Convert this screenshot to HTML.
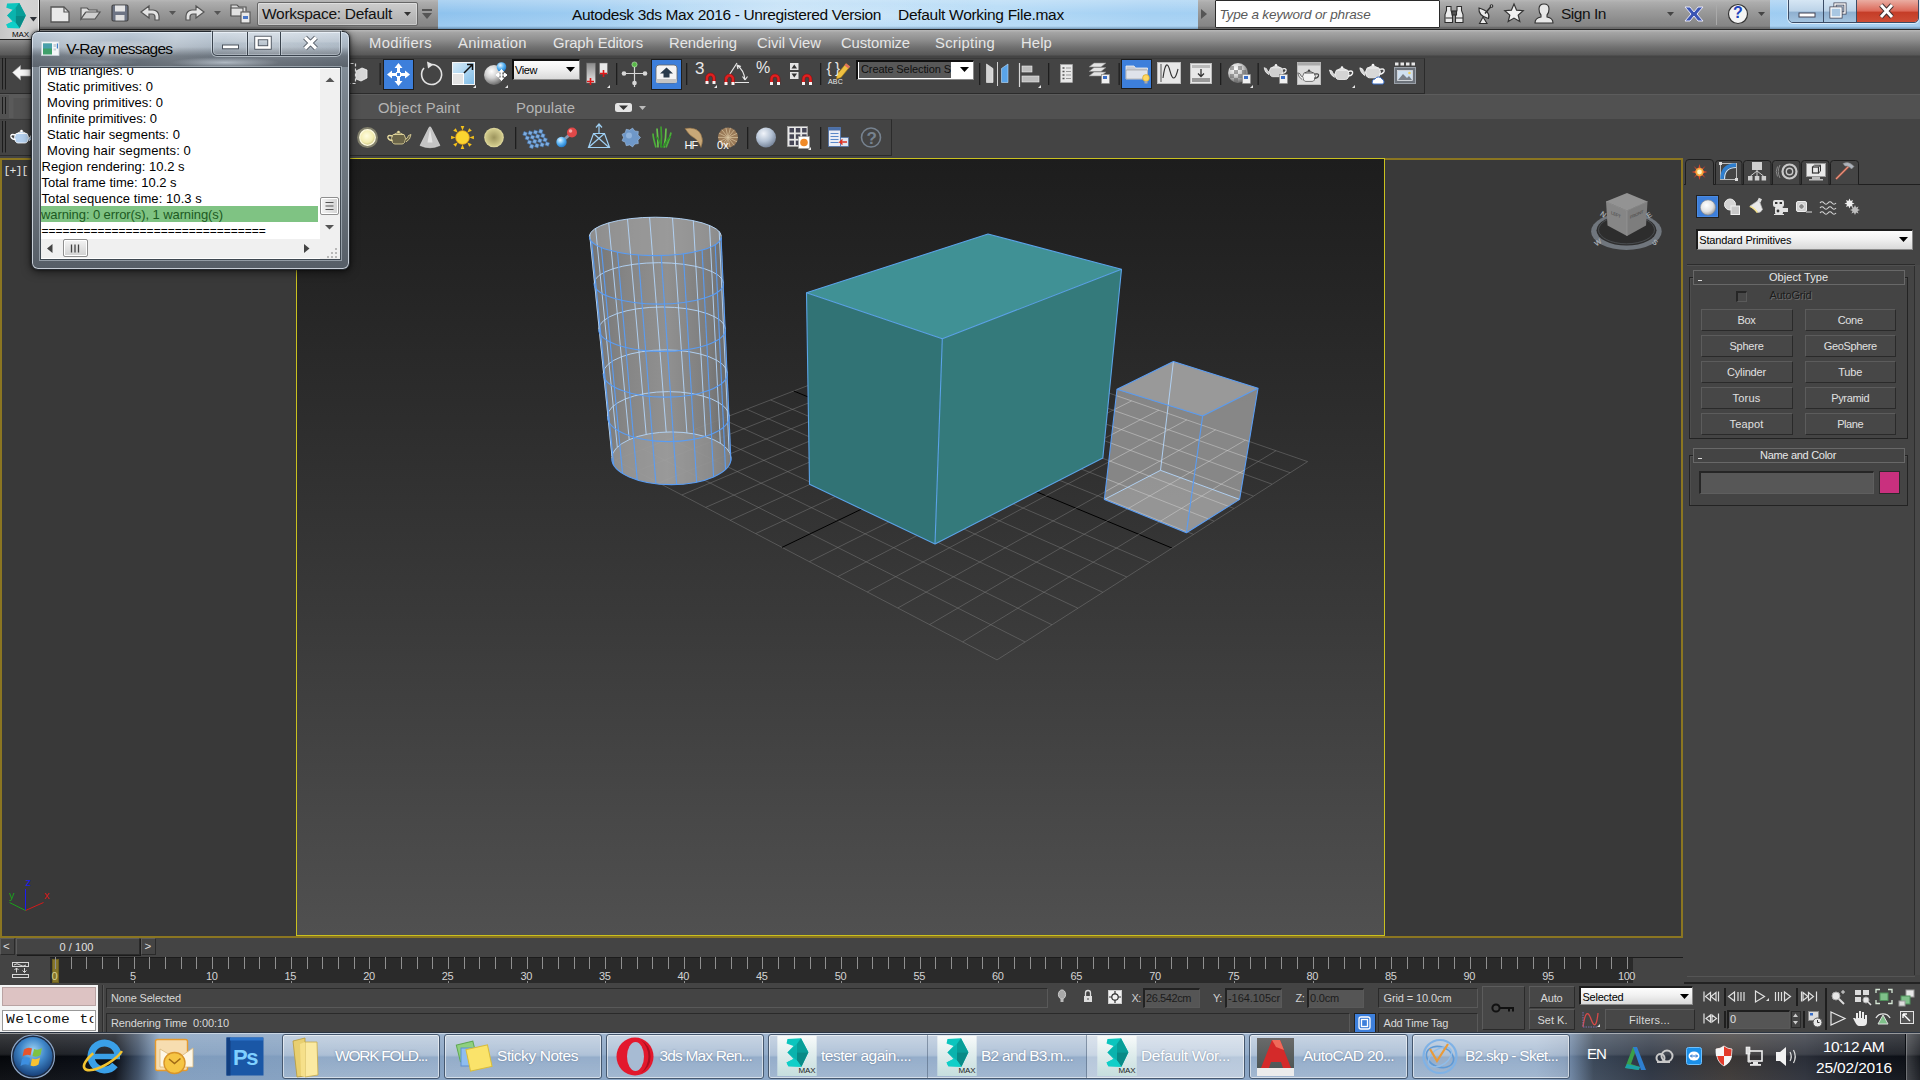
<!DOCTYPE html>
<html><head><meta charset="utf-8"><title>Autodesk 3ds Max 2016</title>
<style>
*{box-sizing:border-box;margin:0;padding:0}
html,body{width:1920px;height:1080px;overflow:hidden;background:#444;font-family:"Liberation Sans",sans-serif;}
.abs{position:absolute}
.t{white-space:pre;line-height:1.15}
#root{position:relative;width:1920px;height:1080px;overflow:hidden;background:#444}
svg{overflow:visible}
</style></head>
<body><div id="root">
<!--top-->
<div class="abs" style="left:0px;top:0px;width:1920px;height:29px;background:linear-gradient(90deg,#8fc3ee 23%,#9ccbf1 30%,#a9d4f4 42%,#b2d9f6 52%,#a4d0f3 60%,#9dcbf1 100%);"></div>
<div class="abs" style="left:0px;top:0px;width:1920px;height:29px;background:linear-gradient(rgba(255,255,255,.28),rgba(255,255,255,0) 45%,rgba(255,255,255,.12) 90%,rgba(60,90,120,.5) 100%);"></div>
<div class="abs" style="left:560px;top:3px;width:520px;height:23px;background:radial-gradient(ellipse at center,rgba(255,255,255,.35),rgba(255,255,255,0) 70%);"></div>
<div class="abs" style="left:438px;top:0px;width:760px;height:29px;background:linear-gradient(100deg,rgba(255,255,255,0) 20%,rgba(255,255,255,.25) 45%,rgba(255,255,255,0) 70%);"></div>
<div class="abs" style="left:0px;top:0px;width:438px;height:29px;background:linear-gradient(#b7b7b7 0,#adadad 8%,#9c9c9c 36%,#8b8b8b 72%,#858585 90%,#6a6a6a 95%,#696969 100%);"></div>
<div class="abs" style="left:1198px;top:0px;width:572px;height:29px;background:linear-gradient(#b7b7b7 0,#adadad 8%,#9c9c9c 36%,#8b8b8b 72%,#858585 90%,#6a6a6a 95%,#696969 100%);"></div>
<svg class="abs" style="left:0px;top:0px;" width="440" height="29" viewBox="0 0 440 29"><path d="M51,7 h13 l5,5 v10 h-18z" fill="#e9e9e9" stroke="#555" stroke-width="1.3"/><path d="M64,7 v5 h5" fill="none" stroke="#555" stroke-width="1.2"/><path d="M81,19 v-11 h6 l2,2 h8 v3 h-12z" fill="#ddd" stroke="#555" stroke-width="1.2"/><path d="M81,19 l5,-7 h14 l-5,7z" fill="#cfcfcf" stroke="#555" stroke-width="1.2"/><rect x="112" y="5" width="16" height="16" rx="1.5" fill="#6d7484" stroke="#444" stroke-width="1.2"/><rect x="115" y="5.5" width="10" height="6" fill="#e6e6e6"/><rect x="115.5" y="15" width="9" height="5.5" fill="#e0e0e0"/><path d="M141,12 l8,-6 v4 h4 a6,6 0 0 1 6,6 v4 h-4 v-3 a3,3 0 0 0 -3,-3 h-3 v4z" fill="#e4e4e4" stroke="#555" stroke-width="1.2"/><polygon points="169,11 176,11 172.5,15" fill="#555"/><path d="M204,12 l-8,-6 v4 h-4 a6,6 0 0 0 -6,6 v4 h4 v-3 a3,3 0 0 1 3,-3 h3 v4z" fill="#e4e4e4" stroke="#555" stroke-width="1.2"/><polygon points="214,11 221,11 217.5,15" fill="#555"/><path d="M231,16 v-11 h6 l2,2 h7 v4" fill="#ddd" stroke="#555" stroke-width="1.2"/><rect x="231" y="8" width="12" height="8" fill="#e2e2e2" stroke="#555" stroke-width="1.1"/><rect x="241" y="12" width="9" height="11" fill="#e8e8e8" stroke="#555" stroke-width="1.1"/><rect x="243" y="16" width="5" height="3" fill="#4a78c8"/><rect x="422" y="9" width="10" height="2" fill="#555"/><polygon points="422,13 432,13 427,19" fill="#555"/></svg>
<div class="abs" style="left:257px;top:2px;width:161px;height:24px;background:linear-gradient(#cdcdcd,#bdbdbd 50%,#adadad);border:1px solid #666;border-radius:2px;box-shadow:inset 0 0 0 1px rgba(255,255,255,.35);"></div>
<div class="abs t " style="left:262px;top:5px;font-size:15.5px;color:#111;letter-spacing:-0.28px;">Workspace: Default</div>
<svg class="abs" style="left:403px;top:11px;" width="10" height="6" viewBox="0 0 10 6"><polygon points="1,1 8,1 4.5,5" fill="#333"/></svg>
<div class="abs t " style="left:572px;top:5.7px;font-size:15.5px;color:#0a0a0a;letter-spacing:-0.36px;">Autodesk 3ds Max 2016 - Unregistered Version</div>
<div class="abs t " style="left:898px;top:5.7px;font-size:15.5px;color:#0a0a0a;letter-spacing:-0.29px;">Default Working File.max</div>
<svg class="abs" style="left:1200px;top:8px;" width="8" height="12" viewBox="0 0 8 12"><polygon points="1,1 7,6 1,11" fill="#555"/></svg>
<div class="abs" style="left:1215px;top:0px;width:224.5px;height:27.5px;background:#fff;border:1px solid #2a2a2a;border-top:1.500px solid #2a2a2a;border-radius:1px;"></div>
<div class="abs t " style="left:1219.5px;top:6.5px;font-size:13.5px;color:#5a5a5a;letter-spacing:-0.17px;font-style:italic;">Type a keyword or phrase</div>
<svg class="abs" style="left:0px;top:0px;" width="1920" height="29" viewBox="0 0 1920 29"><g fill="#ececec" stroke="#2e2e2e" stroke-width="1.1"><path d="M1445,22.500 v-8 l1.500,-4 v-4 h4.500 v4 l1.500,4 v8z"/><path d="M1455.500,22.500 v-8 l1.500,-4 v-4 h4.500 v4 l1.500,4 v8z"/><rect x="1452" y="11" width="4.500" height="4" fill="#555"/><path d="M1445.500,18 h7 M1456,18 h7" fill="none"/></g><g fill="#ececec" stroke="#2e2e2e" stroke-width="1.100"><path d="M1479,8 q-1,8 9.500,10.500 q2.500,-7 -9.500,-10.500z"/><path d="M1485,13.500 l6,-7" fill="none" stroke-width="1.400"/><circle cx="1491.500" cy="6" r="1.300"/><path d="M1479.500,23.500 l3.500,-6.500 l4,6.500z"/></g><path d="M1514,4 l2.6,6.2 6.6,.5 -5,4.4 1.6,6.5 -5.8,-3.5 -5.8,3.5 1.6,-6.5 -5,-4.4 6.6,-.5z" fill="#f1f1f1" stroke="#333" stroke-width="1.2"/><g fill="#e8e8e8" stroke="#333" stroke-width="1.1"><path d="M1535,23 q0,-5 6,-6 v-2 q-2,-2 -2,-6 q0,-5 5,-5 q5,0 5,5 q0,4 -2,6 v2 q6,1 6,6z"/></g><polygon points="1667,12 1674,12 1670.5,16" fill="#444"/><path d="M1685,7 h5 l4,5 4,-5 h5 l-6,7 6,7 h-5 l-4,-5 -4,5 h-5 l6,-7z" fill="#3a55b5" stroke="#e8e8f8" stroke-width="1"/><rect x="1716" y="3" width="1" height="22" fill="#aaa"/><circle cx="1738" cy="14" r="9.5" fill="#f4f4f4" stroke="#333" stroke-width="1.2"/><polygon points="1758,12 1765,12 1761.5,16" fill="#444"/></svg>
<div class="abs t " style="left:1561px;top:5px;font-size:15.5px;color:#111;letter-spacing:-0.47px;">Sign In</div>
<div class="abs t " style="left:1733px;top:4px;font-size:16px;color:#2244bb;letter-spacing:-0.77px;font-weight:bold;">?</div>
<div class="abs" style="left:1788px;top:-1px;width:131px;height:24px;border:1px solid #3b4c66;border-radius:0 0 5px 5px;overflow:hidden;box-shadow:0 0 0 1px rgba(255,255,255,.6);"><div style="position:absolute;left:0;top:0;width:35px;height:24px;background:linear-gradient(#d6e6f4,#bcd3e8 45%,#8fb0d0 52%,#a9c8e2);border-right:1px solid #3b4c66"></div><div style="position:absolute;left:35px;top:0;width:33px;height:24px;background:linear-gradient(#d6e6f4,#bcd3e8 45%,#8fb0d0 52%,#a9c8e2);border-right:1px solid #3b4c66"></div><div style="position:absolute;left:68px;top:0;width:62px;height:24px;background:linear-gradient(#eaada2,#dc6a5a 45%,#c53d28 52%,#cf5038)"></div></div>
<svg class="abs" style="left:0px;top:0px;" width="1920" height="29" viewBox="0 0 1920 29"><rect x="1799" y="13" width="16" height="4" fill="#fff" stroke="#445" stroke-width="1"/><rect x="1835" y="4" width="10" height="9" fill="none" stroke="#445" stroke-width="3"/><rect x="1835" y="4" width="10" height="9" fill="none" stroke="#fff" stroke-width="1.4"/><rect x="1831" y="8" width="10" height="9" fill="#a9c7e2" stroke="#445" stroke-width="3"/><rect x="1831" y="8" width="10" height="9" fill="#a9c7e2" stroke="#fff" stroke-width="1.4"/><path d="M1881,5 l11,12 M1892,5 l-11,12" stroke="#433" stroke-width="5"/><path d="M1881,5 l11,12 M1892,5 l-11,12" stroke="#fff" stroke-width="3"/></svg>
<div class="abs" style="left:0px;top:30px;width:1920px;height:26px;background:linear-gradient(#b8b8b8 0,#a4a4a4 10%,#8e8e8e 38%,#717171 66%,#585858 96%,#444 100%);"></div>
<div class="abs" style="left:0px;top:29px;width:1920px;height:1px;background:#272727;"></div>
<div class="abs t " style="left:369px;top:34.7px;font-size:14.8px;color:#e6e6e6;letter-spacing:0.33px;">Modifiers</div>
<div class="abs t " style="left:458px;top:34.7px;font-size:14.8px;color:#e6e6e6;letter-spacing:0.35px;">Animation</div>
<div class="abs t " style="left:553px;top:34.7px;font-size:14.8px;color:#e6e6e6;letter-spacing:-0.10px;">Graph Editors</div>
<div class="abs t " style="left:669px;top:34.7px;font-size:14.8px;color:#e6e6e6;letter-spacing:-0.03px;">Rendering</div>
<div class="abs t " style="left:757px;top:34.7px;font-size:14.8px;color:#e6e6e6;letter-spacing:0.01px;">Civil View</div>
<div class="abs t " style="left:841px;top:34.7px;font-size:14.8px;color:#e6e6e6;letter-spacing:-0.10px;">Customize</div>
<div class="abs t " style="left:935px;top:34.7px;font-size:14.8px;color:#e6e6e6;letter-spacing:0.27px;">Scripting</div>
<div class="abs t " style="left:1021px;top:34.7px;font-size:14.8px;color:#e6e6e6;letter-spacing:0.14px;">Help</div>
<div class="abs" style="left:0px;top:0px;width:40px;height:40px;background:linear-gradient(90deg,#c6c6c6,#d4d4d4 50%,#d0d0d0);border-right:1px solid #222;border-bottom:1px solid #222;box-shadow:inset -1px 0 0 #f0f0f0;"></div>
<svg class="abs" style="left:0px;top:0px;" width="40" height="30" viewBox="0 0 40 30"><polygon points="7.1,3.5 19.2,2.9 25.8,15.4 19.6,28.3 7.9,27.9 6.3,24.6 12.5,21.5 7.1,15.6 12.5,9.8 6.3,7.7" fill="#0cc5be"/><polygon points="19.2,2.9 25.8,15.4 15.5,15.4 15.5,8" fill="#089e98"/><polygon points="25.8,15.4 19.6,28.3 15.5,22.5 15.5,15.4" fill="#088a86"/><polygon points="15.5,8 15.5,22.5 7.1,15.6" fill="#0ab3ad"/><polygon points="15.5,8 19.2,2.9 25.8,15.4" fill="#0a9c97" opacity=".6"/><polygon points="12.5,21.5 15.5,22.5 19.6,28.3 7.9,27.9 6.3,24.6" fill="#0fcfc8"/><polygon points="29.8,17 37,17 33.4,21.5" fill="#2e3238"/></svg>
<div class="abs t " style="left:11.9px;top:30px;font-size:8px;color:#050505;letter-spacing:-0.11px;">MAX</div>
<div class="abs" style="left:0px;top:58px;width:1425px;height:36px;background:#444;border-right:1px solid #2b2b2b;border-bottom:1px solid #2b2b2b;border-top:1px solid #3a3a3a;"></div>
<div class="abs" style="left:1425px;top:58px;width:495px;height:36px;background:#464646;"></div>
<div class="abs" style="left:0px;top:94px;width:1920px;height:25px;background:#515151;border-top:1px solid #5c5c5c;"></div>
<div class="abs t " style="left:378px;top:99.5px;font-size:14.8px;color:#b4b4b4;letter-spacing:0.11px;">Object Paint</div>
<div class="abs t " style="left:516px;top:99.5px;font-size:14.8px;color:#b4b4b4;letter-spacing:0.07px;">Populate</div>
<svg class="abs" style="left:614px;top:101.5px;" width="36" height="12" viewBox="0 0 36 12"><rect x="1" y="1" width="17" height="9" rx="2.5" fill="#e4e4e4"/><polygon points="5,3.5 14,3.5 9.5,8" fill="#333"/><polygon points="25,4 32,4 28.5,8" fill="#bbb"/></svg>
<div class="abs" style="left:0px;top:119px;width:892px;height:37px;background:#444;border-right:1px solid #2b2b2b;border-bottom:1px solid #2b2b2b;border-top:1px solid #3c3c3c;"></div>
<div class="abs" style="left:892px;top:119px;width:1028px;height:39px;background:#444;"></div>
<svg class="abs" style="left:0px;top:0px;" width="10" height="158" viewBox="0 0 10 158"><rect x="2" y="58" width="1" height="31.5" fill="#1c1c1c"/><rect x="5" y="58" width="1" height="31.5" fill="#1c1c1c"/><rect x="2" y="97" width="1" height="17" fill="#1c1c1c"/><rect x="5" y="97" width="1" height="17" fill="#1c1c1c"/><rect x="2" y="121" width="1" height="31.5" fill="#1c1c1c"/><rect x="5" y="121" width="1" height="31.5" fill="#1c1c1c"/></svg>
<!--tbicons-->
<svg class="abs" style="left:0px;top:0px;" width="1920" height="1080" viewBox="0 0 1920 1080"><defs><radialGradient id="gsph" cx=".38" cy=".32" r=".75"><stop offset="0" stop-color="#fff"/><stop offset=".45" stop-color="#cfcfcf"/><stop offset="1" stop-color="#5a5a5a"/></radialGradient><radialGradient id="bsph" cx=".38" cy=".32" r=".75"><stop offset="0" stop-color="#e8f6ff"/><stop offset=".5" stop-color="#5ab4f4"/><stop offset="1" stop-color="#1a6fc0"/></radialGradient><radialGradient id="ysph" cx=".45" cy=".4" r=".6"><stop offset="0" stop-color="#fffde0"/><stop offset=".7" stop-color="#f2ecb0"/><stop offset="1" stop-color="#c8c080"/></radialGradient><radialGradient id="osph" cx=".5" cy=".5" r=".55"><stop offset="0" stop-color="#9c945c"/><stop offset=".75" stop-color="#cfc88a"/><stop offset="1" stop-color="#efe8b0"/></radialGradient><radialGradient id="lsph" cx=".38" cy=".3" r=".8"><stop offset="0" stop-color="#f0f4fa"/><stop offset=".5" stop-color="#b4c2d4"/><stop offset="1" stop-color="#66748a"/></radialGradient><linearGradient id="pil" x1="0" x2="0" y1="0" y2="1"><stop offset="0" stop-color="#8a8a8a"/><stop offset="1" stop-color="#e8e8e8"/></linearGradient><linearGradient id="lbl" x1="0" x2="1" y1="0" y2="1"><stop offset="0" stop-color="#d8ecf8"/><stop offset="1" stop-color="#7fbce8"/></linearGradient></defs><path d="M12.500,72.500 l8,-7 v4 h10 v6.500 h-10 v4z" fill="#f6f6f6" stroke="#aaa" stroke-width=".6"/><rect x="9" y="94" width="24" height="24" fill="#5a5a5a"/><rect x="13.500" y="98" width="20" height="20" fill="#535353"/><g transform="translate(21.5,137) scale(1.0,1.0)"><path d="M-5.500,-3.500 q-3,4 -.5,8 q1,1.500 2.500,1.500 h7 q1.500,0 2.500,-1.500 q2.500,-4 -.5,-8z" fill="#b4d0ee" stroke="#fff" stroke-width=".8"/><path d="M6.500,1.500 q3,-1 3.500,-4 l2.500,-1 q-.5,5 -5,7.500" fill="#b4d0ee" stroke="#fff" stroke-width=".8"/><path d="M-6,-2 q-5.500,-1.500 -4.500,2 q1,2.500 4.500,2.500" fill="none" stroke="#fff" stroke-width="1.400"/><path d="M-4.500,-3.500 q4.500,-3.500 9,0z" fill="#b4d0ee" stroke="#fff" stroke-width=".8"/><circle cx="0" cy="-6" r="1.300" fill="#fff"/></g><rect x="340.500" y="63.500" width="15" height="20" fill="none" stroke="#e8e8e8" stroke-width="1.200" stroke-dasharray="3 2"/><path d="M356,71 l6,-3 5,2 v8 l-6,3 -5,-2z" fill="#d8d8d8" stroke="#f4f4f4" stroke-width=".8"/><rect x="379.5" y="63" width="1.300" height="22" fill="#1e1e1e"/><rect x="383.500" y="59.500" width="30" height="30" fill="#3d7fdb" stroke="#1e1e1e"/><g transform="translate(398.500,74.500)" fill="#fff"><path d="M0,-11.500 l4,5 h-2.500 v4 h-3 v-4 h-2.500z"/><path d="M0,11.500 l4,-5 h-2.500 v-4 h-3 v4 h-2.500z"/><path d="M-11.500,0 l5,-4 v2.500 h4 v3 h-4 v2.500z"/><path d="M11.500,0 l-5,-4 v2.500 h-4 v3 h4 v2.500z"/><rect x="-2" y="-2" width="4" height="4" fill="#3d7fdb" stroke="#fff" stroke-width="1"/></g><path d="M432,64.500 a10,10 0 1 1 -8,3.500" fill="none" stroke="#e4e4e4" stroke-width="1.600"/><path d="M427,61.500 l6.500,3 -5.500,4z" fill="#e4e4e4"/><rect x="452.500" y="62.500" width="22" height="22" fill="url(#lbl)" stroke="#f4f4f4" stroke-width="1"/><rect x="452.500" y="73.500" width="11" height="11" fill="#e4e4e4" stroke="#fff" stroke-width="1"/><path d="M464,73 l8,-8 M467,64.500 h5.500 v5.500" stroke="#111" stroke-width="1.500" fill="none"/><polygon points="473,88 476,85 476,88" fill="#e8e8e8"/><circle cx="494" cy="75" r="10" fill="url(#gsph)"/><circle cx="501.500" cy="67" r="4.800" fill="url(#bsph)"/><path d="M501.500,69.500 v11 M496,75 h11 M501.500,69.500 l-2,2.500 h4z M501.500,80.500 l-2,-2.500 h4z M496,75 l2.500,-2 v4z M507,75 l-2.500,-2 v4z" stroke="#fff" stroke-width="1" fill="#fff"/><polygon points="505,88 508,85 508,88" fill="#e8e8e8"/><rect x="586.500" y="63" width="9" height="20" fill="url(#pil)" stroke="#666" stroke-width=".5"/><rect x="599.500" y="63" width="8" height="11" fill="#e8e8e8" stroke="#666" stroke-width=".5"/><path d="M590.500,78 v7 M587,81.500 h7 M603.500,70 v7 M600,73.500 h7" stroke="#e01818" stroke-width="1.600"/><polygon points="607,88 610,85 610,88" fill="#e8e8e8"/><rect x="616" y="63" width="1.300" height="22" fill="#1e1e1e"/><path d="M634.500,65 v22 M624,73.500 h20" stroke="#d8d8d8" stroke-width="1.200"/><circle cx="634.500" cy="64.500" r="2.600" fill="#58b848" stroke="#bfe8b8" stroke-width=".6"/><circle cx="624" cy="73.500" r="2.300" fill="#d8d8d8"/><circle cx="645" cy="73.500" r="2.300" fill="#d8d8d8"/><circle cx="634.500" cy="83" r="2.300" fill="#d8d8d8"/><rect x="651.500" y="59.500" width="30" height="30" fill="#3d7fdb" stroke="#1e1e1e"/><rect x="656" y="65" width="21" height="18" rx="3" fill="#f4f4f4" stroke="#666" stroke-width=".8"/><rect x="656" y="79" width="21" height="4" rx="1.500" fill="#c4c4c4"/><path d="M666.500,67.500 l6.500,6 h-3.500 v4 h-6 v-4 h-3.500z" fill="#2a3a4a"/><rect x="686" y="63" width="1.300" height="22" fill="#1e1e1e"/><g transform="translate(705.5,73) scale(1.0)"><path d="M0,10 V5 a5,5 0 0 1 10,0 V10 h-3 V5 a2,2 0 0 0 -4,0 V10z" fill="#e02020" stroke="#7a0c0c" stroke-width=".5"/><rect x="0" y="8" width="3" height="3" fill="#f4f4f4"/><rect x="7" y="8" width="3" height="3" fill="#f4f4f4"/></g><polygon points="714,88 717,85 717,88" fill="#e8e8e8"/><path d="M731,82.500 h18 M726,80 l11,-17" stroke="#e8e8e8" stroke-width="1.200" fill="none"/><path d="M737,65 q7,5 8,15 M737,65 l4,1.500 M737,65 l1,4 M745,80 l-2.500,-3.500 M745,80 l2.500,-3.500" stroke="#e8e8e8" stroke-width="1.200" fill="none"/><g transform="translate(724.5,74) scale(1.0)"><path d="M0,10 V5 a5,5 0 0 1 10,0 V10 h-3 V5 a2,2 0 0 0 -4,0 V10z" fill="#e02020" stroke="#7a0c0c" stroke-width=".5"/><rect x="0" y="8" width="3" height="3" fill="#f4f4f4"/><rect x="7" y="8" width="3" height="3" fill="#f4f4f4"/></g><g transform="translate(770,74) scale(1.0)"><path d="M0,10 V5 a5,5 0 0 1 10,0 V10 h-3 V5 a2,2 0 0 0 -4,0 V10z" fill="#e02020" stroke="#7a0c0c" stroke-width=".5"/><rect x="0" y="8" width="3" height="3" fill="#f4f4f4"/><rect x="7" y="8" width="3" height="3" fill="#f4f4f4"/></g><rect x="790" y="63" width="8.500" height="7" fill="#e4e4e4"/><rect x="790" y="72" width="8.500" height="7" fill="#e4e4e4"/><polygon points="791.500,68.500 797,68.500 794.250,64.500" fill="#333"/><polygon points="791.500,73.500 797,73.500 794.250,77.500" fill="#333"/><g transform="translate(802,74) scale(1.0)"><path d="M0,10 V5 a5,5 0 0 1 10,0 V10 h-3 V5 a2,2 0 0 0 -4,0 V10z" fill="#e02020" stroke="#7a0c0c" stroke-width=".5"/><rect x="0" y="8" width="3" height="3" fill="#f4f4f4"/><rect x="7" y="8" width="3" height="3" fill="#f4f4f4"/></g><rect x="820" y="63" width="1.300" height="22" fill="#1e1e1e"/><path d="M846,63.500 l4,3 -9,11 -4.500,1.500 .5,-4.500z" fill="#f0c040" stroke="#a07818" stroke-width=".6"/><path d="M846,63.500 l4,3 -1.500,2 -4,-3z" fill="#e07060"/><rect x="979" y="63" width="1.300" height="22" fill="#1e1e1e"/><path d="M986.500,64 l6.500,4.500 v14 h-6.500z" fill="#d4d4d4" stroke="#f4f4f4" stroke-width=".6"/><path d="M1008,64 l-6.500,4.500 v14 h6.500z" fill="#5aa4e8" stroke="#bfe0ff" stroke-width=".6"/><path d="M997.500,62 v24" stroke="#d0d0d0" stroke-width="1"/><path d="M1019.500,63 v24" stroke="#d8d8d8" stroke-width="1.200"/><rect x="1022" y="66" width="10" height="6" fill="#bdbdbd" stroke="#eee" stroke-width=".6"/><rect x="1022" y="76" width="17" height="6" fill="#bdbdbd" stroke="#eee" stroke-width=".6"/><polygon points="1038,88 1041,85 1041,88" fill="#e8e8e8"/><rect x="1048" y="63" width="1.300" height="22" fill="#1e1e1e"/><rect x="1060.500" y="64.500" width="12" height="18" fill="#e8e8e8" stroke="#aaa" stroke-width=".6"/><path d="M1062.500,68 h2 M1062.500,71.500 h2 M1062.500,75 h2 M1062.500,78.500 h2" stroke="#555" stroke-width="1.400"/><path d="M1066,68 h5 M1066,71.500 h5 M1066,75 h5 M1066,78.500 h5" stroke="#999" stroke-width="1"/><g fill="#e4e4e4" stroke="#888" stroke-width=".6"><path d="M1089,76 l5,-4 h12 l-5,4z"/><path d="M1089,71.500 l5,-4 h12 l-5,4z"/><path d="M1089,67 l5,-4 h12 l-5,4z"/></g><rect x="1101.500" y="74.500" width="8" height="9" fill="#f0f0f0" stroke="#888" stroke-width=".6"/><rect x="1103" y="76" width="4" height="3" fill="#3a6fc8"/><rect x="1118.5" y="63" width="1.300" height="22" fill="#1e1e1e"/><rect x="1121.500" y="59.500" width="30" height="29" fill="#3d7fdb" stroke="#1e1e1e"/><path d="M1126,66 h8 l1.500,2 h12 v11 h-21.500z" fill="#c8ccd4" stroke="#f4f4f4" stroke-width=".8"/><rect x="1126" y="70" width="21.500" height="9" fill="#dfe3ea" stroke="#888" stroke-width=".5"/><circle cx="1146" cy="78" r="3.400" fill="#ffd860" stroke="#c89a20" stroke-width=".6"/><rect x="1144.500" y="81" width="3" height="2.500" fill="#aaa"/><rect x="1157.500" y="62.500" width="23" height="21" fill="#e8e8e8" stroke="#bbb"/><path d="M1161,64 v18" stroke="#555" stroke-width="1"/><path d="M1163,78 q3,-22 7,-7 t8,-2" fill="none" stroke="#333" stroke-width="1.100"/><rect x="1190.500" y="63.500" width="21" height="20" fill="#e8e8e8" stroke="#bbb"/><rect x="1192" y="65" width="18" height="3" fill="#bbb"/><rect x="1192" y="78" width="18" height="4" fill="#999"/><path d="M1201,69 v7 M1198,73.500 l3,3 3,-3" stroke="#333" stroke-width="1.300" fill="none"/><rect x="1220" y="63" width="1.300" height="22" fill="#1e1e1e"/><circle cx="1238" cy="73" r="10" fill="url(#gsph)"/><g fill="#666" opacity=".55"><rect x="1230" y="66" width="4" height="4"/><rect x="1238" y="66" width="4" height="4"/><rect x="1234" y="70" width="4" height="4"/><rect x="1242" y="70" width="4" height="4"/><rect x="1230" y="74" width="4" height="4"/><rect x="1238" y="74" width="4" height="4"/><rect x="1234" y="78" width="4" height="4"/></g><rect x="1242.500" y="74.500" width="8" height="9" fill="#f0f0f0" stroke="#888" stroke-width=".6"/><rect x="1244" y="76" width="4" height="3" fill="#3a6fc8"/><polygon points="1250,88 1253,85 1253,88" fill="#e8e8e8"/><rect x="1257.5" y="63" width="1.300" height="22" fill="#1e1e1e"/><g transform="translate(1276,71) scale(-0.95,0.95)"><path d="M-5.500,-3.500 q-3,4 -.5,8 q1,1.500 2.500,1.500 h7 q1.500,0 2.500,-1.500 q2.500,-4 -.5,-8z" fill="#cfcfcf" stroke="#f0f0f0" stroke-width=".8"/><path d="M6.500,1.500 q3,-1 3.500,-4 l2.500,-1 q-.5,5 -5,7.500" fill="#cfcfcf" stroke="#f0f0f0" stroke-width=".8"/><path d="M-6,-2 q-5.500,-1.500 -4.500,2 q1,2.500 4.500,2.500" fill="none" stroke="#f0f0f0" stroke-width="1.400"/><path d="M-4.500,-3.500 q4.500,-3.500 9,0z" fill="#cfcfcf" stroke="#f0f0f0" stroke-width=".8"/><circle cx="0" cy="-6" r="1.300" fill="#f0f0f0"/></g><rect x="1279.500" y="74.500" width="8" height="9" fill="#f0f0f0" stroke="#888" stroke-width=".6"/><rect x="1281" y="76" width="4" height="3" fill="#3a6fc8"/><rect x="1297.500" y="62.500" width="23" height="22" fill="#dcdcdc" stroke="#bbb"/><rect x="1297.500" y="62.500" width="23" height="3" fill="#aaa"/><g transform="translate(1309,76) scale(-0.9,0.9)"><path d="M-5.500,-3.500 q-3,4 -.5,8 q1,1.500 2.500,1.500 h7 q1.500,0 2.500,-1.500 q2.500,-4 -.5,-8z" fill="#f4f4f4" stroke="#444" stroke-width=".8"/><path d="M6.500,1.500 q3,-1 3.500,-4 l2.500,-1 q-.5,5 -5,7.500" fill="#f4f4f4" stroke="#444" stroke-width=".8"/><path d="M-6,-2 q-5.500,-1.500 -4.500,2 q1,2.500 4.500,2.500" fill="none" stroke="#444" stroke-width="1.400"/><path d="M-4.500,-3.500 q4.500,-3.500 9,0z" fill="#f4f4f4" stroke="#444" stroke-width=".8"/><circle cx="0" cy="-6" r="1.300" fill="#444"/></g><g transform="translate(1342,73.5) scale(-1.0,1.0)"><path d="M-5.500,-3.500 q-3,4 -.5,8 q1,1.500 2.500,1.500 h7 q1.500,0 2.500,-1.500 q2.500,-4 -.5,-8z" fill="#d4d4d4" stroke="#f4f4f4" stroke-width=".8"/><path d="M6.500,1.500 q3,-1 3.500,-4 l2.500,-1 q-.5,5 -5,7.500" fill="#d4d4d4" stroke="#f4f4f4" stroke-width=".8"/><path d="M-6,-2 q-5.500,-1.500 -4.500,2 q1,2.500 4.500,2.500" fill="none" stroke="#f4f4f4" stroke-width="1.400"/><path d="M-4.500,-3.500 q4.500,-3.500 9,0z" fill="#d4d4d4" stroke="#f4f4f4" stroke-width=".8"/><circle cx="0" cy="-6" r="1.300" fill="#f4f4f4"/></g><polygon points="1352,88 1355,85 1355,88" fill="#e8e8e8"/><g transform="translate(1373,71.5) scale(-1.05,1.05)"><path d="M-5.500,-3.500 q-3,4 -.5,8 q1,1.500 2.500,1.500 h7 q1.500,0 2.500,-1.500 q2.500,-4 -.5,-8z" fill="#d8d8d8" stroke="#f4f4f4" stroke-width=".8"/><path d="M6.500,1.500 q3,-1 3.500,-4 l2.500,-1 q-.5,5 -5,7.500" fill="#d8d8d8" stroke="#f4f4f4" stroke-width=".8"/><path d="M-6,-2 q-5.500,-1.500 -4.500,2 q1,2.500 4.500,2.500" fill="none" stroke="#f4f4f4" stroke-width="1.400"/><path d="M-4.500,-3.500 q4.500,-3.500 9,0z" fill="#d8d8d8" stroke="#f4f4f4" stroke-width=".8"/><circle cx="0" cy="-6" r="1.300" fill="#f4f4f4"/></g><path d="M1373,84 a3,3 0 0 1 2,-5 a4,4 0 0 1 7,0 a3,3 0 0 1 1,5z" fill="#fff" stroke="#3a6fc8" stroke-width="1"/><rect x="1394.500" y="67.500" width="21" height="16" fill="#6c727a" stroke="#9aa0a8"/><rect x="1397.500" y="70.500" width="15" height="10" fill="#cfe0f0" stroke="#eee" stroke-width=".6"/><path d="M1398,80 l5,-6 4,4 2,-2 3,4z" fill="#7a8088"/><circle cx="1409.500" cy="73" r="1.300" fill="#f0d060"/><g fill="#e8e8e8"><rect x="1395" y="62.500" width="3.500" height="3"/><rect x="1400.500" y="62.500" width="3.500" height="3"/><rect x="1406" y="62.500" width="3.500" height="3"/><rect x="1411.500" y="62.500" width="3.500" height="3"/></g><circle cx="367.500" cy="137.5" r="10.500" fill="#f6f0b8" opacity=".35"/><circle cx="367.500" cy="137.5" r="7.800" fill="url(#ysph)" stroke="#fffce0" stroke-width="1.200"/><g transform="translate(398.5,138.0) scale(1.0,1.0)"><path d="M-5.500,-3.500 q-3,4 -.5,8 q1,1.500 2.500,1.500 h7 q1.500,0 2.500,-1.500 q2.500,-4 -.5,-8z" fill="#6a6448" stroke="#e8dca0" stroke-width=".8"/><path d="M6.500,1.500 q3,-1 3.500,-4 l2.500,-1 q-.5,5 -5,7.500" fill="#6a6448" stroke="#e8dca0" stroke-width=".8"/><path d="M-6,-2 q-5.500,-1.500 -4.500,2 q1,2.500 4.500,2.500" fill="none" stroke="#e8dca0" stroke-width="1.400"/><path d="M-4.500,-3.500 q4.500,-3.500 9,0z" fill="#6a6448" stroke="#e8dca0" stroke-width=".8"/><circle cx="0" cy="-6" r="1.300" fill="#e8dca0"/></g><path d="M420,145.5 q10,4.500 20,0 l-9,-18 q-1,-1.500 -2,0z" fill="#c4c4c4" stroke="#e8e8e8" stroke-width=".5"/><path d="M430,128.5 l2.500,14 h-5z" fill="#f4f4f4" opacity=".7"/><path d="M469.5,137.5 L473.9,135.7 L473.9,139.3z" fill="#f6c21a"/><path d="M467.4,142.4 L471.8,144.2 L469.2,146.8z" fill="#f6c21a"/><path d="M462.5,144.5 L464.3,148.9 L460.7,148.9z" fill="#f6c21a"/><path d="M457.6,142.4 L455.8,146.8 L453.2,144.2z" fill="#f6c21a"/><path d="M455.5,137.5 L451.1,139.3 L451.1,135.7z" fill="#f6c21a"/><path d="M457.6,132.6 L453.2,130.8 L455.8,128.2z" fill="#f6c21a"/><path d="M462.5,130.5 L460.7,126.1 L464.3,126.1z" fill="#f6c21a"/><path d="M467.4,132.6 L469.2,128.2 L471.8,130.8z" fill="#f6c21a"/><circle cx="462.500" cy="137.5" r="6.800" fill="#fbd530" stroke="#f0a818" stroke-width=".8"/><circle cx="494" cy="137.5" r="9.800" fill="url(#osph)"/><rect x="515" y="127" width="1.300" height="22" fill="#1e1e1e"/><rect x="524.0" y="131.5" width="3.600" height="3.600" fill="#7faee0" stroke="#3f6ea8" stroke-width=".5" transform="rotate(20 524.0 131.5)"/><rect x="529.2" y="130.7" width="3.600" height="3.600" fill="#7faee0" stroke="#3f6ea8" stroke-width=".5" transform="rotate(20 529.2 130.7)"/><rect x="534.4" y="129.9" width="3.600" height="3.600" fill="#7faee0" stroke="#3f6ea8" stroke-width=".5" transform="rotate(20 534.4 129.9)"/><rect x="539.6" y="129.1" width="3.600" height="3.600" fill="#7faee0" stroke="#3f6ea8" stroke-width=".5" transform="rotate(20 539.6 129.1)"/><rect x="526.2" y="135.7" width="3.600" height="3.600" fill="#7faee0" stroke="#3f6ea8" stroke-width=".5" transform="rotate(20 526.2 135.7)"/><rect x="531.4" y="134.9" width="3.600" height="3.600" fill="#7faee0" stroke="#3f6ea8" stroke-width=".5" transform="rotate(20 531.4 134.9)"/><rect x="536.6" y="134.1" width="3.600" height="3.600" fill="#7faee0" stroke="#3f6ea8" stroke-width=".5" transform="rotate(20 536.6 134.1)"/><rect x="541.8" y="133.3" width="3.600" height="3.600" fill="#7faee0" stroke="#3f6ea8" stroke-width=".5" transform="rotate(20 541.8 133.3)"/><rect x="528.4" y="139.9" width="3.600" height="3.600" fill="#7faee0" stroke="#3f6ea8" stroke-width=".5" transform="rotate(20 528.4 139.9)"/><rect x="533.6" y="139.1" width="3.600" height="3.600" fill="#7faee0" stroke="#3f6ea8" stroke-width=".5" transform="rotate(20 533.6 139.1)"/><rect x="538.8" y="138.3" width="3.600" height="3.600" fill="#7faee0" stroke="#3f6ea8" stroke-width=".5" transform="rotate(20 538.8 138.3)"/><rect x="544.0" y="137.5" width="3.600" height="3.600" fill="#7faee0" stroke="#3f6ea8" stroke-width=".5" transform="rotate(20 544.0 137.5)"/><rect x="530.6" y="144.1" width="3.600" height="3.600" fill="#7faee0" stroke="#3f6ea8" stroke-width=".5" transform="rotate(20 530.6 144.1)"/><rect x="535.8" y="143.3" width="3.600" height="3.600" fill="#7faee0" stroke="#3f6ea8" stroke-width=".5" transform="rotate(20 535.8 143.3)"/><rect x="541.0" y="142.5" width="3.600" height="3.600" fill="#7faee0" stroke="#3f6ea8" stroke-width=".5" transform="rotate(20 541.0 142.5)"/><rect x="546.2" y="141.7" width="3.600" height="3.600" fill="#7faee0" stroke="#3f6ea8" stroke-width=".5" transform="rotate(20 546.2 141.7)"/><path d="M562,141.5 L572,132.5" stroke="#8898b0" stroke-width="3"/><circle cx="561.500" cy="142.0" r="5.200" fill="url(#bsph)"/><circle cx="572" cy="132.5" r="5" fill="#e04848"/><circle cx="570.500" cy="131.0" r="1.800" fill="#f8a8a8"/><g fill="none" stroke="#9fd0f4" stroke-width="1.200"><path d="M588.500,147.5 l5,-14 h11 l5,14z M593.500,133.5 l15.500,14 M604.500,133.5 l-16,14 M599,133.5 v-9 M596,127.5 l3,-3.500 3,3.500"/></g><polygon points="640.5,137.5 638.0,140.1 638.3,143.6 634.8,144.0 632.6,146.9 629.7,144.9 626.2,145.7 625.3,142.3 622.1,140.7 623.5,137.5 622.1,134.3 625.3,132.7 626.2,129.3 629.7,130.1 632.6,128.1 634.8,131.0 638.3,131.4 638.0,134.9" fill="#6f98c8" stroke="#9fc0e4" stroke-width=".6"/><circle cx="629" cy="135.5" r="3" fill="#9fc0e4" opacity=".7"/><path d="M656,147.5 q-3,-10 -3,-14" fill="none" stroke="#4caf3a" stroke-width="1.700"/><path d="M658,147.5 q0,-10 -1,-19" fill="none" stroke="#66c24a" stroke-width="1.700"/><path d="M661,147.5 q1,-10 0,-21" fill="none" stroke="#3f9f30" stroke-width="1.700"/><path d="M664,147.5 q2,-10 2,-19" fill="none" stroke="#66c24a" stroke-width="1.700"/><path d="M666,147.5 q4,-10 5,-15" fill="none" stroke="#4caf3a" stroke-width="1.700"/><path d="M662,147.5 q-4,-10 -6,-11" fill="none" stroke="#2f8f28" stroke-width="1.700"/><path d="M663,147.5 q5,-10 8,-11" fill="none" stroke="#2f8f28" stroke-width="1.700"/><path d="M685,128.5 q12,-2 16,6 q3,6 0,13 q-3,-7 -6,-9 q-6,-3 -10,-10z" fill="#c8a878" stroke="#8a6a40" stroke-width=".6"/><circle cx="728" cy="137.5" r="10" fill="#9a7a58"/><g stroke="#d8c4a0" stroke-width=".7"><path d="M728,137.5 l10.0,0.0"/><path d="M728,137.5 l9.0,4.3"/><path d="M728,137.5 l6.2,7.8"/><path d="M728,137.5 l2.2,9.8"/><path d="M728,137.5 l-2.3,9.7"/><path d="M728,137.5 l-6.3,7.8"/><path d="M728,137.5 l-9.0,4.3"/><path d="M728,137.5 l-10.0,-0.1"/><path d="M728,137.5 l-9.0,-4.4"/><path d="M728,137.5 l-6.2,-7.9"/><path d="M728,137.5 l-2.1,-9.8"/><path d="M728,137.5 l2.4,-9.7"/><path d="M728,137.5 l6.3,-7.7"/><path d="M728,137.5 l9.1,-4.2"/></g><rect x="747" y="127" width="1.300" height="22" fill="#1e1e1e"/><circle cx="766" cy="137.5" r="10" fill="url(#lsph)"/><rect x="787.500" y="126.5" width="20" height="20" fill="#e8e8e8" stroke="#aaa" stroke-width=".6"/><g fill="#445"><rect x="789.5" y="128.0" width="4.500" height="4.500"/><rect x="795.8" y="128.0" width="4.500" height="4.500"/><rect x="802.1" y="128.0" width="4.500" height="4.500"/><rect x="789.5" y="134.3" width="4.500" height="4.500"/><rect x="795.8" y="134.3" width="4.500" height="4.500"/><rect x="802.1" y="134.3" width="4.500" height="4.500"/><rect x="789.5" y="140.6" width="4.500" height="4.500"/><rect x="795.8" y="140.6" width="4.500" height="4.500"/><rect x="802.1" y="140.6" width="4.500" height="4.500"/></g><rect x="798.500" y="136.5" width="11" height="12" fill="#fff" stroke="#999" stroke-width=".6"/><circle cx="804" cy="142.5" r="3.800" fill="#f08a28"/><polygon points="808,150 811,147 811,150" fill="#e8e8e8"/><rect x="820" y="127" width="1.300" height="22" fill="#1e1e1e"/><rect x="828.500" y="127.5" width="12" height="19" fill="#e8ecf4" stroke="#4a6fa8" stroke-width=".8"/><rect x="828.500" y="127.5" width="12" height="3" fill="#4a6fa8"/><path d="M830.500,133.5 h8 M830.500,136.5 h8 M830.500,139.5 h8 M830.500,142.5 h8" stroke="#5a88c8" stroke-width="1"/><rect x="840.500" y="137.5" width="8" height="9" fill="#dfe6f0" stroke="#4a6fa8" stroke-width=".7"/><path d="M847,142.0 h-7 l2.500,-2.500 M840,142.0 l2.500,2.500" stroke="#e03020" stroke-width="1.400" fill="none"/><circle cx="871" cy="137.5" r="9.500" fill="none" stroke="#76828f" stroke-width="1.600"/></svg>
<div class="abs t " style="left:695px;top:59px;font-size:17px;color:#e8e8e8;letter-spacing:-0.45px;">3</div>
<div class="abs t " style="left:756px;top:59px;font-size:16px;color:#e8e8e8;letter-spacing:-0.23px;">%</div>
<div class="abs t " style="left:826.5px;top:59px;font-size:15px;color:#e8e8e8;letter-spacing:-0.40px;">{ }</div>
<div class="abs t " style="left:828px;top:77.5px;font-size:7px;color:#e8e8e8;letter-spacing:0.20px;">ABC</div>
<div class="abs t " style="left:684.5px;top:139px;font-size:11px;color:#fff;letter-spacing:-0.83px;">HF</div>
<div class="abs t " style="left:717px;top:139px;font-size:11px;color:#fff;letter-spacing:0.19px;">0x</div>
<div class="abs t " style="left:866.5px;top:128.5px;font-size:17px;color:#76828f;letter-spacing:-1.38px;font-weight:bold;">?</div>
<div class="abs" style="left:511.5px;top:59px;width:68.5px;height:20.5px;background:linear-gradient(#fdfdfd,#f1f1f1 45%,#d9d9d9);border-top:2px solid #111;border-left:2px solid #111;border-bottom:1px solid #8a8a8a;border-right:1px solid #8a8a8a;"></div>
<div class="abs t " style="left:515px;top:63.7px;font-size:11px;color:#000;letter-spacing:-0.41px;">View</div>
<svg class="abs" style="left:565px;top:66px;" width="12" height="8" viewBox="0 0 12 8"><polygon points="1,1 10,1 5.500,6" fill="#000"/></svg>
<div class="abs" style="left:856px;top:59.5px;width:118px;height:20px;background:#fff;border-top:2px solid #111;border-left:2px solid #111;border-bottom:1px solid #8a8a8a;border-right:1px solid #8a8a8a;"></div>
<div class="abs" style="left:859px;top:62px;width:92px;height:15.5px;background:#585858;"></div>
<div class="abs t" style="left:861px;top:63px;width:90px;overflow:hidden;font-size:11px;color:#101010;letter-spacing:-0.1px">Create Selection Se</div>
<svg class="abs" style="left:959px;top:66px;" width="12" height="8" viewBox="0 0 12 8"><polygon points="1,1 10,1 5.500,6" fill="#000"/></svg>
<!--scene-->
<div class="abs" style="left:0px;top:158px;width:1683px;height:780px;background:#393939;border:2px solid #8b7621;"></div>
<div class="abs" style="left:296px;top:158px;width:1089px;height:778px;border:1px solid #c9c11f;background:linear-gradient(#1d1d1d,#242424 15%,#3a3a3a 60%,#505050);"></div>
<svg class="abs" style="left:0px;top:0px;" width="1920" height="1080" viewBox="0 0 1920 1080"><g stroke-width="1"><line x1="615.0" y1="460.0" x2="939.7" y2="334.7" stroke="#7c7c7c" stroke-opacity=".5"/><line x1="615.0" y1="460.0" x2="997.0" y2="659.9" stroke="#7c7c7c" stroke-opacity=".5"/><line x1="636.5" y1="471.3" x2="961.5" y2="342.2" stroke="#7c7c7c" stroke-opacity=".5"/><line x1="643.0" y1="449.2" x2="1025.1" y2="642.0" stroke="#7c7c7c" stroke-opacity=".5"/><line x1="658.8" y1="483.0" x2="983.8" y2="349.9" stroke="#7c7c7c" stroke-opacity=".5"/><line x1="670.1" y1="438.8" x2="1052.0" y2="624.8" stroke="#7c7c7c" stroke-opacity=".5"/><line x1="681.8" y1="495.0" x2="1006.8" y2="357.8" stroke="#7c7c7c" stroke-opacity=".5"/><line x1="696.4" y1="428.6" x2="1077.9" y2="608.2" stroke="#7c7c7c" stroke-opacity=".5"/><line x1="705.6" y1="507.4" x2="1030.4" y2="365.9" stroke="#7c7c7c" stroke-opacity=".5"/><line x1="721.8" y1="418.8" x2="1102.8" y2="592.3" stroke="#7c7c7c" stroke-opacity=".5"/><line x1="730.2" y1="520.3" x2="1054.7" y2="374.3" stroke="#7c7c7c" stroke-opacity=".5"/><line x1="746.6" y1="409.2" x2="1126.8" y2="577.0" stroke="#7c7c7c" stroke-opacity=".5"/><line x1="755.7" y1="533.6" x2="1079.6" y2="382.9" stroke="#7c7c7c" stroke-opacity=".5"/><line x1="770.6" y1="400.0" x2="1149.8" y2="562.3" stroke="#7c7c7c" stroke-opacity=".5"/><line x1="782.0" y1="547.4" x2="1105.2" y2="391.8" stroke="#000" stroke-opacity="1"/><line x1="793.8" y1="391.0" x2="1172.1" y2="548.1" stroke="#000" stroke-opacity="1"/><line x1="809.4" y1="561.7" x2="1131.6" y2="400.9" stroke="#7c7c7c" stroke-opacity=".5"/><line x1="816.5" y1="382.2" x2="1193.5" y2="534.4" stroke="#7c7c7c" stroke-opacity=".5"/><line x1="837.8" y1="576.6" x2="1158.8" y2="410.2" stroke="#7c7c7c" stroke-opacity=".5"/><line x1="838.5" y1="373.7" x2="1214.2" y2="521.2" stroke="#7c7c7c" stroke-opacity=".5"/><line x1="867.2" y1="592.0" x2="1186.8" y2="419.9" stroke="#7c7c7c" stroke-opacity=".5"/><line x1="859.8" y1="365.5" x2="1234.1" y2="508.5" stroke="#7c7c7c" stroke-opacity=".5"/><line x1="897.8" y1="608.0" x2="1215.6" y2="429.8" stroke="#7c7c7c" stroke-opacity=".5"/><line x1="880.6" y1="357.5" x2="1253.4" y2="496.1" stroke="#7c7c7c" stroke-opacity=".5"/><line x1="929.6" y1="624.6" x2="1245.3" y2="440.1" stroke="#7c7c7c" stroke-opacity=".5"/><line x1="900.8" y1="349.7" x2="1272.1" y2="484.2" stroke="#7c7c7c" stroke-opacity=".5"/><line x1="962.6" y1="641.9" x2="1276.0" y2="450.7" stroke="#7c7c7c" stroke-opacity=".5"/><line x1="920.5" y1="342.1" x2="1290.1" y2="472.7" stroke="#7c7c7c" stroke-opacity=".5"/><line x1="997.0" y1="659.9" x2="1307.6" y2="461.6" stroke="#7c7c7c" stroke-opacity=".5"/><line x1="939.7" y1="334.7" x2="1307.6" y2="461.6" stroke="#7c7c7c" stroke-opacity=".5"/></g><defs><linearGradient id="cylg" x1="0" x2="1" y1="0" y2="0"><stop offset="0" stop-color="#7d7d7d"/><stop offset=".25" stop-color="#8f8f8f"/><stop offset=".55" stop-color="#9c9c9c"/><stop offset=".85" stop-color="#858585"/><stop offset="1" stop-color="#6c6c6c"/></linearGradient></defs><path d="M589.4,236.4 A66.0,19.2 0 0 1 721.4,236.4 L731.1,458.3 A59.7,26.4 0 0 1 611.7,458.3 Z" fill="url(#cylg)" fill-opacity=".9"/><ellipse cx="655.4" cy="236.4" rx="66.0" ry="19.2" fill="#a2a2a2" fill-opacity=".55"/><ellipse cx="671.4" cy="458.3" rx="59.7" ry="26.4" fill="#a8a8a8" fill-opacity=".35"/><g fill="none" stroke="#b4d6fb" stroke-width="1" stroke-opacity=".9"><path d="M589.4,236.4 A66.0,19.2 0 0 1 721.4,236.4"/><path d="M594.1,283.4 A64.7,20.7 0 0 1 723.5,283.4"/><path d="M598.7,329.2 A63.4,22.2 0 0 1 725.5,329.2"/><path d="M603.2,373.5 A62.1,23.6 0 0 1 727.4,373.5"/><path d="M607.5,416.6 A60.9,25.0 0 0 1 729.3,416.6"/><path d="M611.7,458.3 A59.7,26.4 0 0 1 731.1,458.3"/><path d="M589.7,234.7 L611.9,456.0"/><path d="M595.6,228.3 L617.3,447.1"/><path d="M608.7,222.8 L629.2,439.6"/><path d="M627.5,219.0 L646.2,434.4"/><path d="M649.6,217.3 L666.2,432.0"/><path d="M672.5,217.9 L686.9,432.8"/><path d="M693.3,220.7 L705.6,436.7"/><path d="M709.5,225.4 L720.3,443.2"/><path d="M719.2,231.4 L729.1,451.5"/></g><g fill="none" stroke="#5a9cf2" stroke-width="1.1"><path d="M589.4,236.4 A66.0,19.2 0 0 0 721.4,236.4"/><path d="M594.1,283.4 A64.7,20.7 0 0 0 723.5,283.4"/><path d="M598.7,329.2 A63.4,22.2 0 0 0 725.5,329.2"/><path d="M603.2,373.5 A62.1,23.6 0 0 0 727.4,373.5"/><path d="M607.5,416.6 A60.9,25.0 0 0 0 729.3,416.6"/><path d="M611.7,458.3 A59.7,26.4 0 0 0 731.1,458.3"/><path d="M721.1,238.1 L730.9,460.6"/><path d="M715.2,244.5 L725.5,469.5"/><path d="M702.1,250.0 L713.6,477.0"/><path d="M683.3,253.8 L696.6,482.2"/><path d="M661.2,255.5 L676.6,484.6"/><path d="M638.3,254.9 L655.9,483.8"/><path d="M617.5,252.1 L637.2,479.9"/><path d="M601.3,247.4 L622.5,473.4"/><path d="M591.6,241.4 L613.7,465.1"/></g><polygon points="806.5,292.8 988,234 1121.5,269.3 942.3,338.8" fill="#409195"/><polygon points="806.5,292.8 942.3,338.8 935,544 809.5,484.3" fill="#317375"/><polygon points="942.3,338.8 1121.5,269.3 1102.8,458 935,544" fill="#347a7b"/><g fill="none" stroke="#5ba3e8" stroke-width="1.1" stroke-linejoin="round"><polygon points="806.5,292.8 988,234 1121.5,269.3 942.3,338.8"/><polyline points="806.5,292.8 809.5,484.3 935,544 1102.8,458 1121.5,269.3"/><line x1="942.3" y1="338.8" x2="935" y2="544"/></g><polygon points="1117,389.3 1173.4,361.5 1258,388.3 1239.6,499.4 1186.4,532.8 1104.4,499.4" fill="#9a9a9a" fill-opacity=".82"/><polygon points="1117,389.3 1173.4,361.5 1258,388.3 1202.6,416.1" fill="#a6a6a6" fill-opacity=".6"/><polygon points="1202.6,416.1 1258,388.3 1239.6,499.4 1186.4,532.8" fill="#8a8a8a" fill-opacity=".35"/><polygon points="1104.4,499.4 1160.5,470.3 1239.6,499.4 1186.4,532.8" fill="#b0b0b0" fill-opacity=".35"/><clipPath id="sbc"><polygon points="1117,389.3 1173.4,361.5 1258,388.3 1239.6,499.4 1186.4,532.8 1104.4,499.4"/></clipPath><g clip-path="url(#sbc)" stroke="#d8d8d8" stroke-opacity=".42" stroke-width="1"><line x1="615.0" y1="460.0" x2="939.7" y2="334.7"  /><line x1="615.0" y1="460.0" x2="997.0" y2="659.9"  /><line x1="636.5" y1="471.3" x2="961.5" y2="342.2"  /><line x1="643.0" y1="449.2" x2="1025.1" y2="642.0"  /><line x1="658.8" y1="483.0" x2="983.8" y2="349.9"  /><line x1="670.1" y1="438.8" x2="1052.0" y2="624.8"  /><line x1="681.8" y1="495.0" x2="1006.8" y2="357.8"  /><line x1="696.4" y1="428.6" x2="1077.9" y2="608.2"  /><line x1="705.6" y1="507.4" x2="1030.4" y2="365.9"  /><line x1="721.8" y1="418.8" x2="1102.8" y2="592.3"  /><line x1="730.2" y1="520.3" x2="1054.7" y2="374.3"  /><line x1="746.6" y1="409.2" x2="1126.8" y2="577.0"  /><line x1="755.7" y1="533.6" x2="1079.6" y2="382.9"  /><line x1="770.6" y1="400.0" x2="1149.8" y2="562.3"  /><line x1="809.4" y1="561.7" x2="1131.6" y2="400.9"  /><line x1="816.5" y1="382.2" x2="1193.5" y2="534.4"  /><line x1="837.8" y1="576.6" x2="1158.8" y2="410.2"  /><line x1="838.5" y1="373.7" x2="1214.2" y2="521.2"  /><line x1="867.2" y1="592.0" x2="1186.8" y2="419.9"  /><line x1="859.8" y1="365.5" x2="1234.1" y2="508.5"  /><line x1="897.8" y1="608.0" x2="1215.6" y2="429.8"  /><line x1="880.6" y1="357.5" x2="1253.4" y2="496.1"  /><line x1="929.6" y1="624.6" x2="1245.3" y2="440.1"  /><line x1="900.8" y1="349.7" x2="1272.1" y2="484.2"  /><line x1="962.6" y1="641.9" x2="1276.0" y2="450.7"  /><line x1="920.5" y1="342.1" x2="1290.1" y2="472.7"  /><line x1="997.0" y1="659.9" x2="1307.6" y2="461.6"  /><line x1="939.7" y1="334.7" x2="1307.6" y2="461.6"  /></g><g fill="none" stroke="#b4d6fb" stroke-width="1" stroke-opacity=".9"><polyline points="1104.4,499.4 1160.5,470.3 1239.6,499.4"/><line x1="1173.4" y1="361.5" x2="1160.5" y2="470.3"/></g><g fill="none" stroke="#5a9cf2" stroke-width="1.1" stroke-linejoin="round"><polygon points="1117,389.3 1173.4,361.5 1258,388.3 1202.6,416.1"/><polyline points="1117,389.3 1104.4,499.4 1186.4,532.8 1239.6,499.4 1258,388.3"/><line x1="1202.6" y1="416.1" x2="1186.4" y2="532.8"/></g><ellipse cx="1626.400" cy="231.400" rx="35.300" ry="18.600" fill="#70767d"/><ellipse cx="1626.500" cy="230.300" rx="30" ry="15.300" fill="#2d2d2d"/><ellipse cx="1626.500" cy="229.800" rx="28" ry="14" fill="none" stroke="#505458" stroke-width=".8"/><polygon points="1627,193 1647.500,201.500 1627,210.500 1606,201.500" fill="#939393"/><polygon points="1606,201.500 1627,210.500 1627,236 1607.500,225.500" fill="#868686"/><polygon points="1627,210.500 1647.500,201.500 1646,225.500 1627,236" fill="#7d7d7d"/><path d="M1606,201.500 L1627,210.500 L1647.500,201.500 M1627,210.500 V236" stroke="#9a9a9a" stroke-width=".6" fill="none"/><path d="M25.500,910.500 V889" stroke="#1c1cf0" stroke-width="1"/><path d="M25.500,910.500 L43.500,902.500" stroke="#d41a1a" stroke-width="1"/><path d="M25.500,910.500 L9.500,902.500" stroke="#1aa01a" stroke-width="1"/></svg>
<div class="abs t " style="left:25.5px;top:875.5px;font-size:11px;color:#1c1cf0;letter-spacing:-0.50px;">z</div>
<div class="abs t " style="left:44px;top:888.5px;font-size:11px;color:#d41a1a;letter-spacing:-0.50px;">x</div>
<div class="abs t " style="left:9px;top:888.5px;font-size:11px;color:#1aa01a;letter-spacing:-0.50px;">y</div>
<div class="abs t " style="left:1594.5px;top:238.5px;font-size:7.5px;color:#a4aab0;letter-spacing:-1.08px;transform:rotate(-35deg);font-weight:bold;">W</div>
<div class="abs t " style="left:1651.5px;top:238.5px;font-size:7.5px;color:#a4aab0;letter-spacing:1.00px;transform:rotate(35deg);font-weight:bold;">S</div>
<div class="abs t " style="left:1599.5px;top:211px;font-size:7.5px;color:#a4aab0;letter-spacing:0.58px;transform:rotate(35deg);font-weight:bold;">N</div>
<div class="abs t " style="left:1647px;top:211px;font-size:7.5px;color:#a4aab0;letter-spacing:1.00px;transform:rotate(-35deg);font-weight:bold;">E</div>
<div class="abs t " style="left:1611px;top:212px;font-size:4.5px;color:#5c5c5c;letter-spacing:-0.50px;transform:skewY(24deg);font-weight:bold;">LEFT</div>
<div class="abs t " style="left:1630px;top:212px;font-size:4.5px;color:#585858;letter-spacing:-0.50px;transform:skewY(-24deg);font-weight:bold;">FRONT</div>
<div class="abs t" style="left:3.500px;top:164px;font-family:'Liberation Mono',monospace;font-size:11.5px;color:#e6e6e6;letter-spacing:-0.9px">[+][</div>
<!--panel-->
<div class="abs" style="left:1684px;top:158px;width:236px;height:828px;background:#444;"></div>
<div class="abs" style="left:1914px;top:264px;width:1px;height:711px;background:#2e2e2e;"></div>
<div class="abs" style="left:1915px;top:265px;width:5px;height:710px;background:#484848;"></div>
<div class="abs" style="left:1687px;top:976px;width:228px;height:1px;background:#555;"></div>
<div class="abs" style="left:1713px;top:184px;width:207px;height:1px;background:#1f1f1f;"></div>
<div class="abs" style="left:1684px;top:184px;width:2px;height:1px;background:#1f1f1f;"></div>
<svg class="abs" style="left:0px;top:0px;" width="1920" height="1080" viewBox="0 0 1920 1080"><path d="M1685.5,184.5 V163 q0,-3.5 3.5,-3.5 h21 q3.5,0 3.5,3.5 V184.5" fill="#444" stroke="#1f1f1f" stroke-width="1"/><path d="M1715.5,184.5 V163.5 q0,-3 3,-3 h20.5 q3,0 3,3 V184.5" fill="#454545" stroke="#1f1f1f" stroke-width="1"/><path d="M1743.5,184.5 V163.5 q0,-3 3,-3 h21.5 q3,0 3,3 V184.5" fill="#454545" stroke="#1f1f1f" stroke-width="1"/><path d="M1772.5,184.5 V163.5 q0,-3 3,-3 h21.5 q3,0 3,3 V184.5" fill="#454545" stroke="#1f1f1f" stroke-width="1"/><path d="M1801.5,184.5 V163.5 q0,-3 3,-3 h21.5 q3,0 3,3 V184.5" fill="#454545" stroke="#1f1f1f" stroke-width="1"/><path d="M1830.5,184.5 V163.5 q0,-3 3,-3 h22.0 q3,0 3,3 V184.5" fill="#454545" stroke="#1f1f1f" stroke-width="1"/><g transform="translate(1699.5,172)"><path d="M0,-8 L1.5,-2.5 6,-6 2.5,-1.5 8,0 2.5,1.5 6,6 1.5,2.5 0,8 -1.5,2.5 -6,6 -2.5,1.5 -8,0 -2.5,-1.5 -6,-6 -1.5,-2.5z" fill="#e0452c"/><circle r="4.2" fill="#f6a63a"/><circle r="2.4" fill="#fff4c0"/></g><g fill="none"><rect x="1720.5" y="163.5" width="16" height="16" stroke="#bbb" stroke-width="1"/><path d="M1722,179 q0,-14 14,-14" stroke="#2e7fd0" stroke-width="3.4"/><path d="M1724.5,179 q0,-11.5 11.5,-11.5" stroke="#bfe0ff" stroke-width="1.2"/><rect x="1719" y="162" width="3" height="3" fill="#ddd"/><rect x="1735" y="178" width="3" height="3" fill="#ddd"/></g><g fill="#cfcfcf"><rect x="1752" y="162" width="10" height="8"/><rect x="1748" y="176" width="4.5" height="4.5"/><rect x="1754.8" y="176" width="4.5" height="4.5"/><rect x="1761.6" y="176" width="4.5" height="4.5"/><path d="M1757,170 v6 M1757,171 l-6.5,5 M1757,171 l6.5,5" stroke="#cfcfcf" fill="none" stroke-width="1"/></g><g fill="none" stroke="#c8c8c8"><circle cx="1789.5" cy="171.5" r="7" stroke-width="2.2"/><circle cx="1789.5" cy="171.5" r="3.2" stroke-width="1.4"/><path d="M1780,165 q-3.5,6.5 0,13 M1777.5,166.5 q-2.5,5 0,10" stroke="#8a8a8a" stroke-width="1"/></g><g><rect x="1806.5" y="163.5" width="19" height="13" fill="#e9e9e9" stroke="#999"/><rect x="1812" y="177" width="8" height="2" fill="#bbb"/><rect x="1809" y="179" width="14" height="1.5" fill="#bbb"/><rect x="1812.5" y="167" width="6" height="6" fill="none" stroke="#333" stroke-width="1.2"/><path d="M1812.5,167 l2,-1.8 h6 v6 l-2,1.8 M1818.5,167 l2,-1.8" fill="none" stroke="#333" stroke-width="1"/></g><g><path d="M1836,179 L1850,165" stroke="#c76a55" stroke-width="2.2"/><path d="M1836,179 L1850,165" stroke="#e9a08e" stroke-width=".8"/><path d="M1843,163.5 q5,-2.5 9,1 l2,2 -2.5,2.5 -2,-2 q-2,-1.5 -4.5,-1z" fill="#aeb4bc" stroke="#888" stroke-width=".6"/></g></svg>
<div class="abs" style="left:1696px;top:195px;width:23px;height:23px;background:#3d7fdb;border:1px solid #222;box-shadow:inset 0 0 0 1px #4a8ae2;"></div>
<svg class="abs" style="left:0px;top:0px;" width="1920" height="1080" viewBox="0 0 1920 1080"><defs><radialGradient id="sph" cx=".4" cy=".35" r=".7"><stop offset="0" stop-color="#fff"/><stop offset=".6" stop-color="#e2e2e2"/><stop offset="1" stop-color="#9a9a9a"/></radialGradient></defs><circle cx="1708" cy="207.5" r="7.6" fill="url(#sph)" stroke="#888" stroke-width=".6"/><circle cx="1730" cy="204.5" r="5.5" fill="#d4d4d4" stroke="#eee" stroke-width="1"/><rect x="1731" y="206" width="8.5" height="8.5" fill="#c8c8c8" stroke="#f0f0f0" stroke-width="1"/><path d="M1750,206 l9,-6 3.5,9.5 q-2,3.5 -4.5,3z" fill="#e9e9e9" stroke="#bbb" stroke-width=".7"/><path d="M1750,206 q5,1 8,6.5 l-1.2,.6 q-3.6,-5 -7.4,-6z" fill="#f7e38a"/><rect x="1758" y="198.5" width="3.5" height="3.5" fill="#ddd" transform="rotate(25 1760 200)"/><g fill="#e2e2e2"><rect x="1773" y="200" width="11" height="7" rx="2"/><rect x="1775" y="207" width="8" height="7" rx="1"/><rect x="1783" y="208" width="5" height="4"/><rect x="1774" y="214" width="10" height="1"/></g><g fill="#333"><rect x="1775" y="202" width="2.4" height="2"/><rect x="1779.6" y="202" width="2.4" height="2"/><circle cx="1778" cy="211" r="1.4"/></g><g><rect x="1796.5" y="201.5" width="10" height="10" rx="1.5" fill="#cfcfcf" stroke="#eee"/><circle cx="1801.5" cy="206.5" r="2.8" fill="#888" stroke="#f4f4f4"/><path d="M1806,212 h6" stroke="#ddd" stroke-width="1"/></g><g fill="none" stroke="#d6d6d6" stroke-width="1.2"><path d="M1820,203 q2,-2.5 4,0 t4,0 t4,0 t4,0"/><path d="M1820,208 q2,-2.5 4,0 t4,0 t4,0 t4,0"/><path d="M1820,213 q2,-2.5 4,0 t4,0 t4,0 t4,0"/></g><polygon points="1854.5,203.5 1852.0,204.6 1853.0,207.0 1850.6,206.0 1849.5,208.5 1848.4,206.0 1846.0,207.0 1847.0,204.6 1844.5,203.5 1847.0,202.4 1846.0,200.0 1848.4,201.0 1849.5,198.5 1850.6,201.0 1853.0,200.0 1852.0,202.4" fill="#efefef"/><polygon points="1860.0,210.0 1857.5,211.1 1858.5,213.5 1856.1,212.5 1855.0,215.0 1853.9,212.5 1851.5,213.5 1852.5,211.1 1850.0,210.0 1852.5,208.9 1851.5,206.5 1853.9,207.5 1855.0,205.0 1856.1,207.5 1858.5,206.5 1857.5,208.9" fill="#bdbdbd"/></svg>
<div class="abs" style="left:1696px;top:229px;width:217px;height:21px;background:linear-gradient(#fdfdfd,#f1f1f1 45%,#d9d9d9);border-top:2px solid #1c1c1c;border-left:2px solid #1c1c1c;border-bottom:1px solid #8a8a8a;border-right:1px solid #8a8a8a;"></div>
<div class="abs t " style="left:1699.3px;top:233.5px;font-size:11px;color:#000;letter-spacing:-0.18px;">Standard Primitives</div>
<svg class="abs" style="left:1898px;top:236px;" width="12" height="8" viewBox="0 0 12 8"><polygon points="1,1 10,1 5.5,6" fill="#000"/></svg>
<div class="abs" style="left:1687px;top:264px;width:228px;height:1px;background:#2c2c2c;"></div>
<div class="abs" style="left:1687px;top:265px;width:228px;height:1px;background:#505050;"></div>
<div class="abs" style="left:1689px;top:277px;width:219px;height:162px;border:1px solid #232323;box-shadow:inset 1px 1px 0 #4e4e4e;"></div><div class="abs" style="left:1693px;top:270px;width:212px;height:15px;background:#444;border:1px solid #686868;"></div><div class="abs" style="left:1698px;top:280px;width:4px;height:1px;background:#ddd;"></div><div class="abs t " style="left:1769px;top:271px;font-size:11px;color:#e8e8e8;letter-spacing:0.05px;">Object Type</div>
<div class="abs" style="left:1689px;top:455px;width:219px;height:51px;border:1px solid #232323;box-shadow:inset 1px 1px 0 #4e4e4e;"></div><div class="abs" style="left:1693px;top:448px;width:212px;height:15px;background:#444;border:1px solid #686868;"></div><div class="abs" style="left:1698px;top:458px;width:4px;height:1px;background:#ddd;"></div><div class="abs t " style="left:1760px;top:449px;font-size:11px;color:#e8e8e8;letter-spacing:-0.29px;">Name and Color</div>
<div class="abs" style="left:1736px;top:291px;width:11px;height:11px;background:#484848;border-top:2px solid #262626;border-left:2px solid #262626;border-right:1px solid #5a5a5a;border-bottom:1px solid #5a5a5a;"></div>
<div class="abs t " style="left:1769.5px;top:289px;font-size:11px;color:#1c1c1c;letter-spacing:-0.18px;text-shadow:1px 1px 0 #6c6c6c;">AutoGrid</div>
<div class="abs" style="left:1701px;top:309px;width:91.5px;height:21.5px;background:#474747;border-top:1px solid #5c5c5c;border-left:1px solid #5c5c5c;border-right:1px solid #2a2a2a;border-bottom:1px solid #2a2a2a;"></div>
<div class="abs t " style="left:1737.5px;top:313.7px;font-size:11px;color:#e0e0e0;letter-spacing:-0.32px;">Box</div>
<div class="abs" style="left:1804.7px;top:309px;width:91.5px;height:21.5px;background:#474747;border-top:1px solid #5c5c5c;border-left:1px solid #5c5c5c;border-right:1px solid #2a2a2a;border-bottom:1px solid #2a2a2a;"></div>
<div class="abs t " style="left:1837.7px;top:313.7px;font-size:11px;color:#e0e0e0;letter-spacing:-0.32px;">Cone</div>
<div class="abs" style="left:1701px;top:335px;width:91.5px;height:21.5px;background:#474747;border-top:1px solid #5c5c5c;border-left:1px solid #5c5c5c;border-right:1px solid #2a2a2a;border-bottom:1px solid #2a2a2a;"></div>
<div class="abs t " style="left:1729.5px;top:339.7px;font-size:11px;color:#e0e0e0;letter-spacing:-0.24px;">Sphere</div>
<div class="abs" style="left:1804.7px;top:335px;width:91.5px;height:21.5px;background:#474747;border-top:1px solid #5c5c5c;border-left:1px solid #5c5c5c;border-right:1px solid #2a2a2a;border-bottom:1px solid #2a2a2a;"></div>
<div class="abs t " style="left:1823.7px;top:339.7px;font-size:11px;color:#e0e0e0;letter-spacing:-0.36px;">GeoSphere</div>
<div class="abs" style="left:1701px;top:361px;width:91.5px;height:21.5px;background:#474747;border-top:1px solid #5c5c5c;border-left:1px solid #5c5c5c;border-right:1px solid #2a2a2a;border-bottom:1px solid #2a2a2a;"></div>
<div class="abs t " style="left:1727.0px;top:365.7px;font-size:11px;color:#e0e0e0;letter-spacing:-0.17px;">Cylinder</div>
<div class="abs" style="left:1804.7px;top:361px;width:91.5px;height:21.5px;background:#474747;border-top:1px solid #5c5c5c;border-left:1px solid #5c5c5c;border-right:1px solid #2a2a2a;border-bottom:1px solid #2a2a2a;"></div>
<div class="abs t " style="left:1838.2px;top:365.7px;font-size:11px;color:#e0e0e0;letter-spacing:-0.17px;">Tube</div>
<div class="abs" style="left:1701px;top:387px;width:91.5px;height:21.5px;background:#474747;border-top:1px solid #5c5c5c;border-left:1px solid #5c5c5c;border-right:1px solid #2a2a2a;border-bottom:1px solid #2a2a2a;"></div>
<div class="abs t " style="left:1732.5px;top:391.7px;font-size:11px;color:#e0e0e0;letter-spacing:0.22px;">Torus</div>
<div class="abs" style="left:1804.7px;top:387px;width:91.5px;height:21.5px;background:#474747;border-top:1px solid #5c5c5c;border-left:1px solid #5c5c5c;border-right:1px solid #2a2a2a;border-bottom:1px solid #2a2a2a;"></div>
<div class="abs t " style="left:1831.2px;top:391.7px;font-size:11px;color:#e0e0e0;letter-spacing:-0.33px;">Pyramid</div>
<div class="abs" style="left:1701px;top:413px;width:91.5px;height:21.5px;background:#474747;border-top:1px solid #5c5c5c;border-left:1px solid #5c5c5c;border-right:1px solid #2a2a2a;border-bottom:1px solid #2a2a2a;"></div>
<div class="abs t " style="left:1729.5px;top:417.7px;font-size:11px;color:#e0e0e0;letter-spacing:0.16px;">Teapot</div>
<div class="abs" style="left:1804.7px;top:413px;width:91.5px;height:21.5px;background:#474747;border-top:1px solid #5c5c5c;border-left:1px solid #5c5c5c;border-right:1px solid #2a2a2a;border-bottom:1px solid #2a2a2a;"></div>
<div class="abs t " style="left:1837.2px;top:417.7px;font-size:11px;color:#e0e0e0;letter-spacing:-0.43px;">Plane</div>
<div class="abs" style="left:1698.7px;top:471px;width:175px;height:23px;background:#575757;border-top:2px solid #262626;border-left:2px solid #262626;border-right:1px solid #5e5e5e;border-bottom:1px solid #5e5e5e;"></div>
<div class="abs" style="left:1878.7px;top:471px;width:21.5px;height:23px;background:#c9307e;border:1px solid #2a2a2a;"></div>
<!--bottom-->
<div class="abs" style="left:0px;top:938px;width:1684px;height:48px;background:#444;"></div>
<div class="abs" style="left:0px;top:983.5px;width:1920px;height:100px;background:#444;"></div>
<div class="abs" style="left:0px;top:938px;width:14.5px;height:16.5px;background:#444;border-top:1px solid #5c5c5c;border-left:1px solid #5c5c5c;border-right:1px solid #2a2a2a;border-bottom:1px solid #2a2a2a;"></div>
<div class="abs" style="left:16px;top:938px;width:123.5px;height:16.5px;background:#444;border-top:1px solid #5c5c5c;border-left:1px solid #5c5c5c;border-right:1px solid #2a2a2a;border-bottom:1px solid #2a2a2a;box-shadow:1px 1px 0 #1c1c1c;"></div>
<div class="abs" style="left:141px;top:938px;width:14.5px;height:16.5px;background:#444;border-top:1px solid #5c5c5c;border-left:1px solid #5c5c5c;border-right:1px solid #2a2a2a;border-bottom:1px solid #2a2a2a;"></div>
<div class="abs t " style="left:3px;top:939.5px;font-size:11.5px;color:#ddd;letter-spacing:-2.15px;">&lt;</div>
<div class="abs t " style="left:144.5px;top:939.5px;font-size:11.5px;color:#ddd;letter-spacing:-3.11px;">&gt;</div>
<div class="abs t " style="left:59.5px;top:941px;font-size:11px;color:#e0e0e0;letter-spacing:0.05px;">0 / 100</div>
<div class="abs" style="left:50px;top:956.5px;width:1583px;height:26px;background:#2a2a2a;"></div>
<div class="abs" style="left:50px;top:956.5px;width:1632.5px;height:1.5px;background:#1c1c1c;"></div>
<div class="abs" style="left:52px;top:959px;width:7px;height:24px;background:#85752a;border:1px solid #6b5e1f;"></div>
<svg class="abs" style="left:0px;top:0px;" width="1920" height="1080" viewBox="0 0 1920 1080"><path d="M55.5,957 V969 M71.5,957 V969 M86.5,957 V969 M102.5,957 V969 M118.5,957 V969 M134.5,957 V969 M134.5,981 V983 M149.5,957 V969 M165.5,957 V969 M181.5,957 V969 M196.5,957 V969 M212.5,957 V969 M212.5,981 V983 M228.5,957 V969 M244.5,957 V969 M259.5,957 V969 M275.5,957 V969 M291.5,957 V969 M291.5,981 V983 M307.5,957 V969 M322.5,957 V969 M338.5,957 V969 M354.5,957 V969 M369.5,957 V969 M369.5,981 V983 M385.5,957 V969 M401.5,957 V969 M417.5,957 V969 M432.5,957 V969 M448.5,957 V969 M448.5,981 V983 M464.5,957 V969 M479.5,957 V969 M495.5,957 V969 M511.5,957 V969 M527.5,957 V969 M527.5,981 V983 M542.5,957 V969 M558.5,957 V969 M574.5,957 V969 M589.5,957 V969 M605.5,957 V969 M605.5,981 V983 M621.5,957 V969 M637.5,957 V969 M652.5,957 V969 M668.5,957 V969 M684.5,957 V969 M684.5,981 V983 M700.5,957 V969 M715.5,957 V969 M731.5,957 V969 M747.5,957 V969 M762.5,957 V969 M762.5,981 V983 M778.5,957 V969 M794.5,957 V969 M810.5,957 V969 M825.5,957 V969 M841.5,957 V969 M841.5,981 V983 M857.5,957 V969 M872.5,957 V969 M888.5,957 V969 M904.5,957 V969 M920.5,957 V969 M920.5,981 V983 M935.5,957 V969 M951.5,957 V969 M967.5,957 V969 M982.5,957 V969 M998.5,957 V969 M998.5,981 V983 M1014.5,957 V969 M1030.5,957 V969 M1045.5,957 V969 M1061.5,957 V969 M1077.5,957 V969 M1077.5,981 V983 M1093.5,957 V969 M1108.5,957 V969 M1124.5,957 V969 M1140.5,957 V969 M1155.5,957 V969 M1155.5,981 V983 M1171.5,957 V969 M1187.5,957 V969 M1203.5,957 V969 M1218.5,957 V969 M1234.5,957 V969 M1234.5,981 V983 M1250.5,957 V969 M1265.5,957 V969 M1281.5,957 V969 M1297.5,957 V969 M1313.5,957 V969 M1313.5,981 V983 M1328.5,957 V969 M1344.5,957 V969 M1360.5,957 V969 M1375.5,957 V969 M1391.5,957 V969 M1391.5,981 V983 M1407.5,957 V969 M1423.5,957 V969 M1438.5,957 V969 M1454.5,957 V969 M1470.5,957 V969 M1470.5,981 V983 M1486.5,957 V969 M1501.5,957 V969 M1517.5,957 V969 M1533.5,957 V969 M1548.5,957 V969 M1548.5,981 V983 M1564.5,957 V969 M1580.5,957 V969 M1596.5,957 V969 M1611.5,957 V969 M1627.5,957 V969 M1627.5,981 V983" stroke="#909090" stroke-width="1" fill="none"/></svg>
<div class="abs t " style="left:51.5px;top:969.5px;font-size:11px;color:#d8d090;letter-spacing:-0.12px;">0</div>
<div class="abs t " style="left:130.1px;top:969.5px;font-size:11px;color:#d4d4d4;letter-spacing:-0.12px;">5</div>
<div class="abs t " style="left:206.0px;top:969.5px;font-size:11px;color:#d4d4d4;letter-spacing:-0.37px;">10</div>
<div class="abs t " style="left:284.6px;top:969.5px;font-size:11px;color:#d4d4d4;letter-spacing:-0.37px;">15</div>
<div class="abs t " style="left:363.2px;top:969.5px;font-size:11px;color:#d4d4d4;letter-spacing:-0.37px;">20</div>
<div class="abs t " style="left:441.8px;top:969.5px;font-size:11px;color:#d4d4d4;letter-spacing:-0.37px;">25</div>
<div class="abs t " style="left:520.4px;top:969.5px;font-size:11px;color:#d4d4d4;letter-spacing:-0.37px;">30</div>
<div class="abs t " style="left:599.0px;top:969.5px;font-size:11px;color:#d4d4d4;letter-spacing:-0.37px;">35</div>
<div class="abs t " style="left:677.6px;top:969.5px;font-size:11px;color:#d4d4d4;letter-spacing:-0.37px;">40</div>
<div class="abs t " style="left:756.1px;top:969.5px;font-size:11px;color:#d4d4d4;letter-spacing:-0.37px;">45</div>
<div class="abs t " style="left:834.8px;top:969.5px;font-size:11px;color:#d4d4d4;letter-spacing:-0.37px;">50</div>
<div class="abs t " style="left:913.4px;top:969.5px;font-size:11px;color:#d4d4d4;letter-spacing:-0.37px;">55</div>
<div class="abs t " style="left:992.0px;top:969.5px;font-size:11px;color:#d4d4d4;letter-spacing:-0.37px;">60</div>
<div class="abs t " style="left:1070.6px;top:969.5px;font-size:11px;color:#d4d4d4;letter-spacing:-0.37px;">65</div>
<div class="abs t " style="left:1149.2px;top:969.5px;font-size:11px;color:#d4d4d4;letter-spacing:-0.37px;">70</div>
<div class="abs t " style="left:1227.8px;top:969.5px;font-size:11px;color:#d4d4d4;letter-spacing:-0.37px;">75</div>
<div class="abs t " style="left:1306.4px;top:969.5px;font-size:11px;color:#d4d4d4;letter-spacing:-0.37px;">80</div>
<div class="abs t " style="left:1385.0px;top:969.5px;font-size:11px;color:#d4d4d4;letter-spacing:-0.37px;">85</div>
<div class="abs t " style="left:1463.5px;top:969.5px;font-size:11px;color:#d4d4d4;letter-spacing:-0.37px;">90</div>
<div class="abs t " style="left:1542.2px;top:969.5px;font-size:11px;color:#d4d4d4;letter-spacing:-0.37px;">95</div>
<div class="abs t " style="left:1618.0px;top:969.5px;font-size:11px;color:#d4d4d4;letter-spacing:-0.45px;">100</div>
<svg class="abs" style="left:0px;top:0px;" width="1920" height="1080" viewBox="0 0 1920 1080"><g fill="none" stroke="#d8d8d8" stroke-width="1"><rect x="12.5" y="962.5" width="16" height="4"/><rect x="12.5" y="974.5" width="16" height="3"/><path d="M14,965 q3,-2.5 6,0 t6,0"/><path d="M16.500,972.5 v-4.500 m-2,2 l2,-2 2,2 M24.500,968 v4.500 m-2,-2 l2,2 2,-2"/></g></svg>
<div class="abs" style="left:0px;top:985px;width:98px;height:48px;background:#f4f4f4;"></div>
<div class="abs" style="left:2px;top:987px;width:94px;height:19px;background:#ddc3c3;border:1px solid #b9a3a3;"></div>
<div class="abs" style="left:2px;top:1010px;width:94px;height:21px;background:#fff;border:1px solid #999;"></div>
<div class="abs t" style="left:6px;top:1012px;width:81px;overflow:hidden;font-family:'Liberation Mono',monospace;font-size:13.5px;color:#111;letter-spacing:0.4px;transform-origin:0 0;transform:scaleX(1.08)">Welcome to</div>
<div class="abs" style="left:102px;top:985px;width:2px;height:48px;background:#2e2e2e;border-right:1px solid #555;"></div>
<div class="abs" style="left:106px;top:987.5px;width:942px;height:20px;background:#444;border-top:1px solid #2a2a2a;border-left:1px solid #2a2a2a;border-right:1px solid #595959;border-bottom:1px solid #595959;"></div>
<div class="abs" style="left:106px;top:1012.5px;width:1244px;height:21px;background:#444;border-top:1px solid #2a2a2a;border-left:1px solid #2a2a2a;border-right:1px solid #595959;border-bottom:1px solid #595959;"></div>
<div class="abs t " style="left:111px;top:991.7px;font-size:11px;color:#d8d8d8;letter-spacing:-0.17px;">None Selected</div>
<div class="abs t " style="left:111px;top:1016.7px;font-size:11px;color:#d8d8d8;letter-spacing:-0.11px;">Rendering Time  0:00:10</div>
<svg class="abs" style="left:0px;top:0px;" width="1920" height="1080" viewBox="0 0 1920 1080"><g><ellipse cx="1062" cy="994.500" rx="3.6" ry="4.600" fill="#a8a8a8" stroke="#ddd" stroke-width=".8"/><rect x="1060.500" y="998.500" width="3" height="3.500" fill="#bbb"/></g><g><path d="M1085.500,996 v-3 a2.500,2.500 0 0 1 5,0 v3" fill="none" stroke="#ddd" stroke-width="1.300"/><rect x="1084" y="996" width="8" height="6" fill="#ddd"/><rect x="1087.500" y="998" width="1" height="2" fill="#444"/></g><g><rect x="1108.500" y="990.500" width="13" height="13" fill="#f2f2f2" stroke="#ccc"/><circle cx="1115" cy="997" r="3.200" fill="none" stroke="#333" stroke-width="1.200"/><path d="M1115,991 v3 M1115,1000 v3 M1109,997 h3 M1118,997 h3" stroke="#333" stroke-width="1.200"/></g></svg>
<div class="abs t " style="left:1131.5px;top:991.7px;font-size:11px;color:#d0d0d0;letter-spacing:-0.70px;">X:</div>
<div class="abs" style="left:1142.5px;top:988px;width:57px;height:19.5px;background:#555;border-top:1px solid #2a2a2a;border-left:1px solid #2a2a2a;border-right:1px solid #595959;border-bottom:1px solid #595959;border-top:2px solid #222;border-left:2px solid #222;"></div>
<div class="abs t " style="left:1146px;top:991.7px;font-size:11px;color:#1c1c1c;letter-spacing:-0.41px;">26.542cm</div>
<div class="abs t " style="left:1213px;top:991.7px;font-size:11px;color:#d0d0d0;letter-spacing:-0.39px;">Y:</div>
<div class="abs" style="left:1224.5px;top:988px;width:57px;height:19.5px;background:#555;border-top:1px solid #2a2a2a;border-left:1px solid #2a2a2a;border-right:1px solid #595959;border-bottom:1px solid #595959;border-top:2px solid #222;border-left:2px solid #222;"></div>
<div class="abs t " style="left:1228px;top:991.7px;font-size:11px;color:#1c1c1c;letter-spacing:-0.06px;">-164.105cr</div>
<div class="abs t " style="left:1295.5px;top:991.7px;font-size:11px;color:#d0d0d0;letter-spacing:-0.39px;">Z:</div>
<div class="abs" style="left:1306.5px;top:988px;width:57px;height:19.5px;background:#555;border-top:1px solid #2a2a2a;border-left:1px solid #2a2a2a;border-right:1px solid #595959;border-bottom:1px solid #595959;border-top:2px solid #222;border-left:2px solid #222;"></div>
<div class="abs t " style="left:1310px;top:991.7px;font-size:11px;color:#1c1c1c;letter-spacing:-0.19px;">0.0cm</div>
<div class="abs" style="left:1378px;top:987.5px;width:99.5px;height:20px;background:#444;border-top:1px solid #2a2a2a;border-left:1px solid #2a2a2a;border-right:1px solid #595959;border-bottom:1px solid #595959;"></div>
<div class="abs t " style="left:1383.5px;top:992px;font-size:11px;color:#d8d8d8;letter-spacing:-0.11px;">Grid = 10.0cm</div>
<div class="abs" style="left:1378px;top:1012.5px;width:99.5px;height:21px;background:#444;border-top:1px solid #2a2a2a;border-left:1px solid #2a2a2a;border-right:1px solid #595959;border-bottom:1px solid #595959;"></div>
<div class="abs t " style="left:1383.5px;top:1016.7px;font-size:11px;color:#d8d8d8;letter-spacing:-0.21px;">Add Time Tag</div>
<div class="abs" style="left:1354px;top:1012.5px;width:21.5px;height:21px;background:#3d7fdb;border:1px solid #222;"></div>
<svg class="abs" style="left:0px;top:0px;" width="1920" height="1080" viewBox="0 0 1920 1080"><g fill="none" stroke="#fff" stroke-width="1.300"><rect x="1359" y="1017" width="11" height="12" rx="2"/><rect x="1361.500" y="1019.500" width="6" height="7"/></g></svg>
<div class="abs" style="left:1481.5px;top:986px;width:43px;height:43.5px;background:#474747;border-top:1px solid #5c5c5c;border-left:1px solid #5c5c5c;border-right:1px solid #2a2a2a;border-bottom:1px solid #2a2a2a;"></div>
<svg class="abs" style="left:0px;top:0px;" width="1920" height="1080" viewBox="0 0 1920 1080"><g fill="none" stroke="#111" stroke-width="2"><circle cx="1496" cy="1008" r="3.600"/><path d="M1500,1008 h14 M1509,1008 v3.500 M1513,1008 v3.500"/></g></svg>
<div class="abs" style="left:1528.5px;top:986px;width:46.5px;height:21.5px;background:#474747;border-top:1px solid #5c5c5c;border-left:1px solid #5c5c5c;border-right:1px solid #2a2a2a;border-bottom:1px solid #2a2a2a;"></div>
<div class="abs" style="left:1528.5px;top:1008.5px;width:46.5px;height:21px;background:#474747;border-top:1px solid #5c5c5c;border-left:1px solid #5c5c5c;border-right:1px solid #2a2a2a;border-bottom:1px solid #2a2a2a;"></div>
<div class="abs t " style="left:1540.5px;top:991.7px;font-size:11px;color:#d8d8d8;letter-spacing:-0.16px;">Auto</div>
<div class="abs t " style="left:1537.5px;top:1013.5px;font-size:11px;color:#d8d8d8;letter-spacing:0.01px;">Set K.</div>
<div class="abs" style="left:1579px;top:986px;width:114px;height:19px;background:linear-gradient(#fdfdfd,#f1f1f1 45%,#d9d9d9);border-top:2px solid #1c1c1c;border-left:2px solid #1c1c1c;border-bottom:1px solid #8a8a8a;border-right:1px solid #8a8a8a;"></div>
<div class="abs t " style="left:1582.5px;top:990.5px;font-size:11px;color:#000;letter-spacing:-0.23px;">Selected</div>
<svg class="abs" style="left:1679px;top:993px;" width="12" height="8" viewBox="0 0 12 8"><polygon points="1,1 10,1 5.500,6" fill="#000"/></svg>
<svg class="abs" style="left:0px;top:0px;" width="1920" height="1080" viewBox="0 0 1920 1080"><g fill="none"><path d="M1583,1027 q3,-22 8,-8 t7,-6" stroke="#d84a4a" stroke-width="1.300"/><path d="M1583,1012 v15 h15" stroke="#8878c8" stroke-width=".8" stroke-dasharray="1.500 1"/><path d="M1597,1027 l3,-3 v3z" fill="#ddd"/></g></svg>
<div class="abs" style="left:1605px;top:1009px;width:89.5px;height:20.5px;background:#474747;border-top:1px solid #5c5c5c;border-left:1px solid #5c5c5c;border-right:1px solid #2a2a2a;border-bottom:1px solid #2a2a2a;"></div>
<div class="abs t " style="left:1629px;top:1013.5px;font-size:11px;color:#d8d8d8;letter-spacing:0.19px;">Filters...</div>
<svg class="abs" style="left:0px;top:0px;" width="1920" height="1080" viewBox="0 0 1920 1080"><g fill="none" stroke="#e0e0e0" stroke-width="1.200"><path d="M1704,991.5 v10"/><path d="M1710.5,992.5 l-5,4.0 l5,4.0z" fill="none"/><path d="M1716,992.5 l-5,4.0 l5,4.0z" fill="none"/><path d="M1718.500,991.5 v10"/><path d="M1734.5,992.0 l-6,4.5 l6,4.5z" fill="none"/><path d="M1738,992.0 v9 M1741,992.0 v9 M1744,992.0 v9"/><path d="M1755.5,991.0 l9,5.5 l-9,5.5z" fill="none"/><path d="M1775.500,992.0 v9 M1778.500,992.0 v9 M1781.500,992.0 v9"/><path d="M1784.5,992.0 l6,4.5 l-6,4.5z" fill="none"/><path d="M1801.500,991.5 v10"/><path d="M1803,992.5 l5,4.0 l-5,4.0z" fill="none"/><path d="M1808.5,992.5 l5,4.0 l-5,4.0z" fill="none"/><path d="M1816.500,991.5 v10"/><path d="M1704,1013.5 v10 M1718.500,1013.5 v10"/><path d="M1710.5,1015.0 l-4.5,3.5 l4.5,3.5z" fill="none"/><path d="M1712,1015.0 l4.5,3.5 l-4.5,3.5z" fill="none"/></g><path d="M1766,1001 l3,-3 v3z M1766,1001" fill="#ddd"/></svg>
<div class="abs" style="left:1726.5px;top:1009.5px;width:63px;height:19.5px;background:#555;border-top:1px solid #2a2a2a;border-left:1px solid #2a2a2a;border-right:1px solid #595959;border-bottom:1px solid #595959;border-top:2px solid #1e1e1e;border-left:2px solid #1e1e1e;"></div>
<div class="abs" style="left:1790.5px;top:1011px;width:10px;height:17px;border:1px solid #2a2a2a;"></div>
<div class="abs t " style="left:1730px;top:1013px;font-size:11px;color:#e0e0e0;letter-spacing:-0.12px;">0</div>
<svg class="abs" style="left:0px;top:0px;" width="1920" height="1080" viewBox="0 0 1920 1080"><polygon points="1793,1017 1798,1017 1795.500,1013.500" fill="#ccc"/><polygon points="1793,1021 1798,1021 1795.500,1024.500" fill="#ccc"/></svg>
<div class="abs" style="left:1825px;top:988px;width:1.5px;height:42px;background:#1e1e1e;"></div>
<div class="abs" style="left:1724px;top:988px;width:1.5px;height:18px;background:#1e1e1e;"></div>
<div class="abs" style="left:1796px;top:988px;width:1.5px;height:18px;background:#1e1e1e;"></div>
<div class="abs" style="left:1724px;top:1011px;width:1.5px;height:17px;background:#1e1e1e;"></div>
<div class="abs" style="left:1803px;top:1011px;width:1.5px;height:17px;background:#1e1e1e;"></div>
<div class="abs" style="left:1684px;top:982px;width:236px;height:1.5px;background:#222;"></div>
<svg class="abs" style="left:0px;top:0px;" width="1920" height="1080" viewBox="0 0 1920 1080"><g><rect x="1808.500" y="1011.500" width="10" height="9" fill="#dcdcdc" stroke="#888"/><rect x="1810" y="1013" width="3" height="2.500" fill="#3a6fc8"/><circle cx="1817.500" cy="1022.500" r="4.500" fill="#e8e8e8" stroke="#555"/><path d="M1817.500,1020 v2.500 h2" stroke="#333" fill="none"/></g></svg>
<svg class="abs" style="left:0px;top:0px;" width="1920" height="1080" viewBox="0 0 1920 1080"><circle cx="1836" cy="996" r="4" fill="#e8e8e8" stroke="#aaa"/><path d="M1839,999 l5,5" stroke="#ddd" stroke-width="2"/><path d="M1843,990 v4 M1841,992 h4" stroke="#ddd" stroke-width="1"/><g fill="#dcdcdc"><rect x="1855" y="990" width="6" height="5"/><rect x="1863" y="990" width="6" height="5"/><rect x="1855" y="997" width="6" height="5"/></g><circle cx="1866" cy="1000" r="3" fill="#e8e8e8" stroke="#aaa"/><path d="M1868,1002 l3,3" stroke="#ddd" stroke-width="1.600"/><g fill="none" stroke="#d6e8d6" stroke-width="1.300"><path d="M1876,993 v-3.500 h4 M1888,989.500 h4 v3.500 M1892,1000 v3.500 h-4 M1880,1003.500 h-4 v-3.500"/></g><rect x="1880" y="993" width="8" height="7.500" fill="#7fc08a" stroke="#4f8f5a"/><g><rect x="1906" y="990" width="8" height="7" fill="#e8e8e8" stroke="#999"/><rect x="1901" y="996" width="9" height="8" fill="#7fc08a" stroke="#4f8f5a"/><rect x="1899" y="1001" width="6" height="5" fill="#ddd" stroke="#999"/></g><g fill="none" stroke="#e6e6e6" stroke-width="1.200"><path d="M1831,1012 l14,6.500 -14,6.500z"/></g><g fill="#ececec"><path d="M1856,1019 v-6 h2 v5 h1 v-7 h2 v7 h1 v-6 h2 v7 h1 v-4 h2 v7 q0,4 -4,4 h-4 q-2,0 -4,-4 l-2,-4 h2z"/></g><g><path d="M1878,1024 l5,-9 5,9z" fill="#7fc08a" stroke="#ddd"/><path d="M1876,1018 a8,8 0 0 1 14,0" fill="none" stroke="#e6e6e6" stroke-width="1.300"/></g><g><rect x="1900.500" y="1011.500" width="13" height="12" fill="#555" stroke="#e4e4e4"/><path d="M1903,1014 l7,7 M1903,1014 h4 M1903,1014 v4" stroke="#fff" stroke-width="1.400" fill="none"/></g></svg>
<!--taskbar-->
<div class="abs" style="left:0px;top:1032px;width:1920px;height:48px;background:linear-gradient(90deg,#05070b 0,#0a0e16 6%,#3b4c63 7.2%,#7f9cbd 8.3%,#86a2c3 30%,#86a2c3 80%,#7791b2 81.5%,#3a4758 83%,#2a3240 86%,#3a3634 90%,#2a2e38 94%,#10141c 97%,#0b0e14 100%);"></div>
<div class="abs" style="left:0px;top:1032px;width:1920px;height:48px;background:linear-gradient(rgba(255,255,255,.22),rgba(255,255,255,.10) 45%,rgba(255,255,255,0) 50%,rgba(255,255,255,.05));border-top:1px solid #2a3442;box-shadow:inset 0 1px 0 rgba(255,255,255,.45);"></div>
<div class="abs" style="left:282px;top:1033.5px;width:158px;height:45.5px;background:linear-gradient(rgba(255,255,255,.42),rgba(255,255,255,.28) 48%,rgba(255,255,255,.12) 52%,rgba(255,255,255,.2));border:1px solid #46586f;border-radius:3px;box-shadow:inset 0 0 0 1px rgba(255,255,255,.55);"></div>
<div class="abs" style="left:444px;top:1033.5px;width:158px;height:45.5px;background:linear-gradient(rgba(255,255,255,.42),rgba(255,255,255,.28) 48%,rgba(255,255,255,.12) 52%,rgba(255,255,255,.2));border:1px solid #46586f;border-radius:3px;box-shadow:inset 0 0 0 1px rgba(255,255,255,.55);"></div>
<div class="abs" style="left:606px;top:1033.5px;width:158px;height:45.5px;background:linear-gradient(rgba(255,255,255,.42),rgba(255,255,255,.28) 48%,rgba(255,255,255,.12) 52%,rgba(255,255,255,.2));border:1px solid #46586f;border-radius:3px;box-shadow:inset 0 0 0 1px rgba(255,255,255,.55);"></div>
<div class="abs" style="left:768px;top:1033.5px;width:477px;height:45.5px;background:linear-gradient(rgba(255,255,255,.42),rgba(255,255,255,.28) 48%,rgba(255,255,255,.12) 52%,rgba(255,255,255,.2));border:1px solid #46586f;border-radius:3px;box-shadow:inset 0 0 0 1px rgba(255,255,255,.55);"></div>
<div class="abs" style="left:926.5px;top:1035px;width:160.5px;height:43px;border-left:1px solid rgba(70,88,111,.5);border-right:1px solid rgba(70,88,111,.5);"></div>
<div class="abs" style="left:1087px;top:1034.5px;width:157px;height:43.5px;background:linear-gradient(rgba(255,255,255,.35),rgba(255,255,255,.3));"></div>
<div class="abs" style="left:1249px;top:1033.5px;width:159px;height:45.5px;background:linear-gradient(rgba(255,255,255,.42),rgba(255,255,255,.28) 48%,rgba(255,255,255,.12) 52%,rgba(255,255,255,.2));border:1px solid #46586f;border-radius:3px;box-shadow:inset 0 0 0 1px rgba(255,255,255,.55);"></div>
<div class="abs" style="left:1411.5px;top:1033.5px;width:158.5px;height:45.5px;background:linear-gradient(rgba(255,255,255,.42),rgba(255,255,255,.28) 48%,rgba(255,255,255,.12) 52%,rgba(255,255,255,.2));border:1px solid #46586f;border-radius:3px;box-shadow:inset 0 0 0 1px rgba(255,255,255,.55);"></div>
<div class="abs t " style="left:335px;top:1047.3px;font-size:15.5px;color:#fff;letter-spacing:-1.23px;text-shadow:0 0 2px rgba(40,60,90,.5);">WORK FOLD...</div>
<div class="abs t " style="left:497px;top:1047.3px;font-size:15.5px;color:#fff;letter-spacing:-0.43px;text-shadow:0 0 2px rgba(40,60,90,.5);">Sticky Notes</div>
<div class="abs t " style="left:659.5px;top:1047.3px;font-size:15.5px;color:#fff;letter-spacing:-0.84px;text-shadow:0 0 2px rgba(40,60,90,.5);">3ds Max Ren...</div>
<div class="abs t " style="left:821px;top:1047.3px;font-size:15.5px;color:#fff;letter-spacing:-0.51px;text-shadow:0 0 2px rgba(40,60,90,.5);">tester again....</div>
<div class="abs t " style="left:981px;top:1047.3px;font-size:15.5px;color:#fff;letter-spacing:-0.75px;text-shadow:0 0 2px rgba(40,60,90,.5);">B2 and B3.m...</div>
<div class="abs t " style="left:1141px;top:1047.3px;font-size:15.5px;color:#fff;letter-spacing:-0.33px;text-shadow:0 0 2px rgba(40,60,90,.5);">Default Wor...</div>
<div class="abs t " style="left:1303px;top:1047.3px;font-size:15.5px;color:#fff;letter-spacing:-0.62px;text-shadow:0 0 2px rgba(40,60,90,.5);">AutoCAD 20...</div>
<div class="abs t " style="left:1465px;top:1047.3px;font-size:15.5px;color:#fff;letter-spacing:-0.76px;text-shadow:0 0 2px rgba(40,60,90,.5);">B2.skp - Sket...</div>
<svg class="abs" style="left:0px;top:0px;" width="1920" height="1080" viewBox="0 0 1920 1080"><defs><radialGradient id="orb" cx=".5" cy=".35" r=".65"><stop offset="0" stop-color="#9fd4f4"/><stop offset=".5" stop-color="#3f86c8"/><stop offset="1" stop-color="#173f78"/></radialGradient><linearGradient id="mxg" x1="0" x2="0" y1="0" y2="1"><stop offset="0" stop-color="#fff" stop-opacity=".6"/><stop offset="1" stop-color="#9fc9c9" stop-opacity=".5"/></linearGradient></defs><circle cx="33" cy="1056.5" r="21.5" fill="#1b2b44" stroke="#8fa8c8" stroke-width="1.2"/><circle cx="33" cy="1056.5" r="19.5" fill="url(#orb)"/><g transform="translate(33,1056.5)"><path d="M-9,-7 q4,-3 8,-1 l-1.500,7 q-4,-2 -8,1z" fill="#e8542c"/><path d="M1,-7.500 q4,2 8,-1 l-1.500,7 q-4,3 -8,1z" fill="#7fc241"/><path d="M-11,2.500 q4,-3 8,-1 l-1.500,7 q-4,-2 -8,1z" fill="#3d8fe0"/><path d="M-1,2 q4,2 8,-1 l-1.500,7 q-4,3 -8,1z" fill="#f9c231"/></g><g fill="none"><path d="M118,1055.500 a13.500,13.500 0 1 0 -3,9.500" stroke="#3aa0e8" stroke-width="7"/><path d="M92,1056.500 h28" stroke="#3aa0e8" stroke-width="5.500"/><ellipse cx="104" cy="1056" rx="23" ry="8.500" stroke="#f2c330" stroke-width="2.600" transform="rotate(-32 104 1056)" stroke-dasharray="62 40" stroke-dashoffset="-8"/></g><g><rect x="155.500" y="1039.500" width="32" height="31" rx="2" fill="#f7ddb0" stroke="#e59a2e" stroke-width="1.400"/><path d="M160,1049 l17,10 16,-11 v19 h-33z" fill="#fdf6e6" stroke="#d9b77a" stroke-width=".8"/><circle cx="174.500" cy="1063" r="10.500" fill="#f6c544" stroke="#d8952a" stroke-width="1.400"/><path d="M169,1059 l5.500,4.500 6,-5" fill="none" stroke="#a06a16" stroke-width="1.600"/></g><g><rect x="226.500" y="1037.500" width="37" height="38" fill="#1a57a6"/><rect x="226.500" y="1037.500" width="4" height="38" fill="#123f80"/><rect x="230" y="1037.500" width="33" height="3" fill="#2c73c8"/></g><g><path d="M293,1041 l12,-3 v38 l-8,1z" fill="#e8cf70" stroke="#b99a3a" stroke-width=".8"/><path d="M305,1042 h12 l1,33 -13,2z" fill="#fbeaa2" stroke="#c9ab48" stroke-width=".8"/><path d="M300,1044 l5,-2 v35 l-4,-1z" fill="#f6e08a"/></g><g><rect x="458" y="1043" width="17" height="17" fill="#8fd07f" stroke="#5fa852" transform="rotate(-14 466 1051)"/><rect x="461" y="1048" width="18" height="18" fill="#8fbdf0" stroke="#5f8fcf"/><rect x="468" y="1047" width="22" height="22" fill="#fae36a" stroke="#d9bd3a" transform="rotate(-12 479 1058)"/></g><g><ellipse cx="635" cy="1056.500" rx="18.500" ry="19" fill="#e3182d"/><ellipse cx="635.500" cy="1056.500" rx="8.500" ry="14.500" fill="#a7bbd3"/><path d="M641,1040 a19,19 0 0 1 0,33 a17,20 0 0 0 0,-33z" fill="#a80f22"/></g><rect x="777.5" y="1036" width="39" height="40" fill="#eef4f4"/><rect x="777.5" y="1036" width="39" height="40" fill="url(#mxg)"/><g transform="translate(779.5,1035) scale(1.12)"><polygon points="7.1,3.5 19.2,2.9 25.8,15.4 19.6,28.3 7.9,27.9 6.3,24.6 12.5,21.5 7.1,15.6 12.5,9.8 6.3,7.7" fill="#0cc5be"/><polygon points="19.2,2.9 25.8,15.4 15.5,15.4 15.5,8" fill="#089e98"/><polygon points="25.8,15.4 19.6,28.3 15.5,22.5 15.5,15.4" fill="#088a86"/><polygon points="15.5,8 15.5,22.5 7.1,15.6" fill="#0ab3ad"/><polygon points="12.5,21.5 15.5,22.5 19.6,28.3 7.9,27.9 6.3,24.6" fill="#0fcfc8"/></g><rect x="937.5" y="1036" width="39" height="40" fill="#eef4f4"/><rect x="937.5" y="1036" width="39" height="40" fill="url(#mxg)"/><g transform="translate(939.5,1035) scale(1.12)"><polygon points="7.1,3.5 19.2,2.9 25.8,15.4 19.6,28.3 7.9,27.9 6.3,24.6 12.5,21.5 7.1,15.6 12.5,9.8 6.3,7.7" fill="#0cc5be"/><polygon points="19.2,2.9 25.8,15.4 15.5,15.4 15.5,8" fill="#089e98"/><polygon points="25.8,15.4 19.6,28.3 15.5,22.5 15.5,15.4" fill="#088a86"/><polygon points="15.5,8 15.5,22.5 7.1,15.6" fill="#0ab3ad"/><polygon points="12.5,21.5 15.5,22.5 19.6,28.3 7.9,27.9 6.3,24.6" fill="#0fcfc8"/></g><rect x="1097.5" y="1036" width="39" height="40" fill="#eef4f4"/><rect x="1097.5" y="1036" width="39" height="40" fill="url(#mxg)"/><g transform="translate(1099.5,1035) scale(1.12)"><polygon points="7.1,3.5 19.2,2.9 25.8,15.4 19.6,28.3 7.9,27.9 6.3,24.6 12.5,21.5 7.1,15.6 12.5,9.8 6.3,7.7" fill="#0cc5be"/><polygon points="19.2,2.9 25.8,15.4 15.5,15.4 15.5,8" fill="#089e98"/><polygon points="25.8,15.4 19.6,28.3 15.5,22.5 15.5,15.4" fill="#088a86"/><polygon points="15.5,8 15.5,22.5 7.1,15.6" fill="#0ab3ad"/><polygon points="12.5,21.5 15.5,22.5 19.6,28.3 7.9,27.9 6.3,24.6" fill="#0fcfc8"/></g><g><rect x="1257" y="1038" width="37" height="38" fill="#2a2a2a"/><rect x="1257" y="1038" width="37" height="38" fill="url(#mxg)" opacity=".5"/><path d="M1261,1068 l11,-28 h8 l11,28 h-8 l-2,-6 h-10 l-2,6z" fill="#d42a2a"/><path d="M1272,1040 h8 l4,10 -8,-3z" fill="#f06a5a"/><rect x="1257" y="1068" width="37" height="8" fill="#ececec"/></g><g fill="none"><circle cx="1440" cy="1056.500" r="16.500" stroke="#7fb2e6" stroke-width="2.200"/><ellipse cx="1440" cy="1057" rx="14" ry="10" stroke="#5f9ad6" stroke-width="1.600" transform="rotate(20 1440 1057)"/><ellipse cx="1440" cy="1057" rx="13" ry="8" stroke="#8fbdea" stroke-width="1.400" transform="rotate(-35 1440 1057)"/><path d="M1430,1049 l7,12 11,-17" stroke="#e89a3a" stroke-width="2.200"/></g><g><path d="M1625,1068 l8,-21 h4 l-6,17 9,3 -2,3z" fill="#3aa04a"/><path d="M1633,1047 h4 l9,23 h-5z" fill="#2e7fd0"/><path d="M1627,1064 l13,3 -1,3 -14,-2z" fill="#1ba0a8"/></g><g fill="none" stroke="#c8c8c8" stroke-width="2"><circle cx="1660.500" cy="1058" r="4"/><circle cx="1667" cy="1056" r="5.500"/><path d="M1657,1062 h13"/></g><g><rect x="1686.500" y="1047.500" width="15" height="17" rx="2" fill="#1b8fe8" stroke="#6fc0ff"/><ellipse cx="1694" cy="1056" rx="5.500" ry="4.500" fill="#fff"/><path d="M1690.500,1056 h7 M1692,1054.500 l-1.500,1.500 1.500,1.500 M1696,1054.500 l1.500,1.500 -1.500,1.500" stroke="#1b6fd0" fill="none" stroke-width="1"/></g><g><path d="M1716,1049 q4,0 8,-3 q4,3 8,3 q0,13 -8,17 q-8,-4 -8,-17z" fill="#e23a2a" stroke="#f4f4f4" stroke-width=".8"/><path d="M1724,1046 v10 h-8 q-.5,-4 0,-7 q4,0 8,-3z M1724,1056 h8 q-1,7 -8,10z" fill="#f6f6f6"/></g><g fill="#e8e8e8"><rect x="1749" y="1051" width="13" height="10" fill="none" stroke="#f0f0f0" stroke-width="1.600"/><rect x="1753" y="1062" width="5" height="2"/><rect x="1750" y="1064" width="11" height="1.800"/><rect x="1746" y="1047" width="4" height="7" fill="#ddd" stroke="#fff" stroke-width=".6"/><path d="M1748,1054 v8 h3" fill="none" stroke="#eee" stroke-width="1"/></g><g><path d="M1776,1052 h4 l6,-5 v19 l-6,-5 h-4z" fill="#f2f2f2"/><path d="M1790,1052 q2.500,4.500 0,9 M1793.500,1050 q3.500,6.500 0,13" fill="none" stroke="#e0e0e0" stroke-width="1.200"/></g></svg>
<div class="abs t " style="left:233px;top:1045px;font-size:22px;color:#7fd0ff;letter-spacing:-1.45px;font-weight:bold;">Ps</div>
<div class="abs t " style="left:798.5px;top:1066px;font-size:8px;color:#222;letter-spacing:-0.11px;">MAX</div>
<div class="abs t " style="left:958.5px;top:1066px;font-size:8px;color:#222;letter-spacing:-0.11px;">MAX</div>
<div class="abs t " style="left:1118.5px;top:1066px;font-size:8px;color:#222;letter-spacing:-0.11px;">MAX</div>
<div class="abs t " style="left:1587px;top:1045px;font-size:15px;color:#fff;letter-spacing:-0.92px;">EN</div>
<div class="abs t " style="left:1823px;top:1037.5px;font-size:15.5px;color:#fff;letter-spacing:-0.56px;">10:12 AM</div>
<div class="abs t " style="left:1816px;top:1058.5px;font-size:15.5px;color:#fff;letter-spacing:-0.16px;">25/02/2016</div>
<div class="abs" style="left:1906px;top:1033.5px;width:14px;height:46.5px;background:linear-gradient(90deg,rgba(255,255,255,.18),rgba(255,255,255,.05));border-left:1px solid rgba(255,255,255,.35);box-shadow:-1px 0 0 #0a0d12;"></div>
<!--vraywin-->
<div class="abs" style="left:30.5px;top:30.5px;width:319px;height:239px;border-radius:7px;border:1px solid #23282e;background:linear-gradient(#bccad8 0,#aab7c4 5%,#929eaa 10%,#818c97 15%,#77818b 30%,#6a737c 65%,#565e67 100%);box-shadow:inset 0 0 0 1px rgba(235,242,250,.75), 0 2px 10px rgba(0,0,0,.55), 0 0 3px rgba(0,0,0,.6);"></div>
<div class="abs" style="left:33px;top:32.5px;width:314px;height:34px;border-radius:6px 6px 0 0;background:linear-gradient(100deg,rgba(255,255,255,.0) 0,rgba(255,255,255,.18) 12%,rgba(255,255,255,0) 30%,rgba(255,255,255,.22) 45%,rgba(255,255,255,.05) 60%,rgba(255,255,255,.2) 75%,rgba(255,255,255,0) 100%);"></div>
<div class="abs" style="left:32px;top:47px;width:316px;height:20px;background:linear-gradient(rgba(50,56,64,0),rgba(50,56,64,.42) 45%,rgba(50,56,64,.5));"></div>
<div class="abs" style="left:170px;top:57px;width:110px;height:11px;background:radial-gradient(ellipse at center,rgba(225,235,245,.6),rgba(225,235,245,0) 70%);"></div>
<div class="abs" style="left:60px;top:57px;width:80px;height:10px;background:radial-gradient(ellipse at center,rgba(200,212,225,.3),rgba(225,235,245,0) 70%);"></div>
<div class="abs" style="left:60px;top:40px;width:120px;height:20px;background:radial-gradient(ellipse at center,rgba(255,255,255,.5),rgba(255,255,255,0) 72%);"></div>
<div class="abs t " style="left:66.2px;top:40.3px;font-size:15.5px;color:#050505;letter-spacing:-0.80px;">V-Ray messages</div>
<svg class="abs" style="left:0px;top:0px;" width="400" height="100" viewBox="0 0 400 100"><rect x="41.500" y="41.500" width="17.500" height="14" fill="#f4f6f8" stroke="#c8d0d8" stroke-width=".8"/><rect x="43" y="43.500" width="9" height="11" fill="#3f9f6a"/><rect x="43" y="43.500" width="9" height="5" fill="#4f9fc8" opacity=".7"/><rect x="53.500" y="44" width="2.500" height="3" fill="#c8d0d8"/><rect x="53.500" y="48.500" width="2.500" height="2" fill="#c8d0d8"/><rect x="56.800" y="43.500" width="1.200" height="5" fill="#3f7fc8"/></svg>
<div class="abs" style="left:212px;top:30.5px;width:128.5px;height:25.5px;border:1px solid #3a434d;border-top:none;border-radius:0 0 5px 5px;background:linear-gradient(rgba(255,255,255,.30),rgba(255,255,255,.16) 45%,rgba(255,255,255,.04) 50%,rgba(255,255,255,.12));box-shadow:0 0 0 1px rgba(230,238,246,.55), inset 0 0 0 1px rgba(230,238,246,.35);"></div>
<div class="abs" style="left:247px;top:31.5px;width:1px;height:23.5px;background:#3a434d;box-shadow:1px 0 0 rgba(230,238,246,.4),-1px 0 0 rgba(230,238,246,.4);"></div>
<div class="abs" style="left:280px;top:31.5px;width:1px;height:23.5px;background:#3a434d;box-shadow:1px 0 0 rgba(230,238,246,.4),-1px 0 0 rgba(230,238,246,.4);"></div>
<svg class="abs" style="left:0px;top:0px;" width="400" height="100" viewBox="0 0 400 100"><rect x="222.500" y="45" width="16" height="3.800" fill="#fff" stroke="#4a525c" stroke-width="1"/><rect x="256.500" y="38" width="13" height="9.500" fill="none" stroke="#4a525c" stroke-width="4.400"/><rect x="256.500" y="38" width="13" height="9.500" fill="none" stroke="#fff" stroke-width="2.600"/><path d="M305,37.500 l11,11 M316,37.500 l-11,11" stroke="#4a525c" stroke-width="5"/><path d="M305,37.500 l11,11 M316,37.500 l-11,11" stroke="#fff" stroke-width="3.200"/></svg>
<div class="abs" style="left:40px;top:67px;width:300.5px;height:192.5px;background:#fff;border:1px solid #3f4851;overflow:hidden;box-shadow:0 0 0 1px rgba(220,230,240,.45);"><div style="position:absolute;left:0px;top:138.300px;width:277px;height:15.700px;background:#7fc383"></div><div class="t" style="position:absolute;left:6px;top:-4.7px;font-size:13px;line-height:16px;color:#000;letter-spacing:0.00px">MB triangles: 0</div><div class="t" style="position:absolute;left:6px;top:11.3px;font-size:13px;line-height:16px;color:#000;letter-spacing:0.03px">Static primitives: 0</div><div class="t" style="position:absolute;left:6px;top:27.3px;font-size:13px;line-height:16px;color:#000;letter-spacing:0.06px">Moving primitives: 0</div><div class="t" style="position:absolute;left:6px;top:43.3px;font-size:13px;line-height:16px;color:#000;letter-spacing:-0.06px">Infinite primitives: 0</div><div class="t" style="position:absolute;left:6px;top:59.3px;font-size:13px;line-height:16px;color:#000;letter-spacing:0.03px">Static hair segments: 0</div><div class="t" style="position:absolute;left:6px;top:75.3px;font-size:13px;line-height:16px;color:#000;letter-spacing:0.10px">Moving hair segments: 0</div><div class="t" style="position:absolute;left:0.5px;top:91.3px;font-size:13px;line-height:16px;color:#000;letter-spacing:0.03px">Region rendering: 10.2 s</div><div class="t" style="position:absolute;left:0.5px;top:107.3px;font-size:13px;line-height:16px;color:#000;letter-spacing:-0.00px">Total frame time: 10.2 s</div><div class="t" style="position:absolute;left:0.5px;top:123.3px;font-size:13px;line-height:16px;color:#000;letter-spacing:0.08px">Total sequence time: 10.3 s</div><div class="t" style="position:absolute;left:0px;top:139.3px;font-size:13px;line-height:16px;color:#1c5a22;letter-spacing:-0.09px">warning: 0 error(s), 1 warning(s)</div><div class="t" style="position:absolute;left:0.5px;top:154.9px;font-size:12px;line-height:16px;color:#000;letter-spacing:0.00px">================================</div><div style="position:absolute;left:0px;top:170.800px;width:279px;height:19.500px;background:#f0f0f0"></div><div style="position:absolute;left:22px;top:171px;width:25px;height:18px;background:linear-gradient(#f4f4f4,#e2e2e2 50%,#d2d2d2);border:1px solid #8f8f8f;border-radius:2px;box-shadow:inset 0 0 0 1px #fff"></div><div style="position:absolute;left:279px;top:1px;width:20px;height:170.500px;background:#f0f0f0"></div><div style="position:absolute;left:279px;top:129px;width:18.500px;height:18px;background:linear-gradient(90deg,#f4f4f4,#e2e2e2 50%,#d2d2d2);border:1px solid #8f8f8f;border-radius:2px;box-shadow:inset 0 0 0 1px #fff"></div><div style="position:absolute;left:279px;top:170px;width:20px;height:21px;background:#f0f0f0"></div><svg style="position:absolute;left:0;top:0" width="300" height="193"><polygon points="6,180.500 11.500,176 11.500,185" fill="#444"/><polygon points="263,176 263,185 268.500,180.500" fill="#444"/><path d="M30.500,176.500 v8 M34,176.500 v8 M37.500,176.500 v8" stroke="#444" stroke-width="1.300"/><polygon points="284.500,14 293.500,14 289,9.500" fill="#555"/><polygon points="284,157 293,157 288.500,161.500" fill="#555"/><path d="M284.500,134.500 h8 M284.500,138 h8 M284.500,141.500 h8" stroke="#555" stroke-width="1.200"/><g fill="#b8b8b8"><rect x="294" y="180" width="2" height="2"/><rect x="294" y="184" width="2" height="2"/><rect x="294" y="188" width="2" height="2"/><rect x="290" y="184" width="2" height="2"/><rect x="290" y="188" width="2" height="2"/><rect x="286" y="188" width="2" height="2"/></g></svg></div>
</div></body></html>
